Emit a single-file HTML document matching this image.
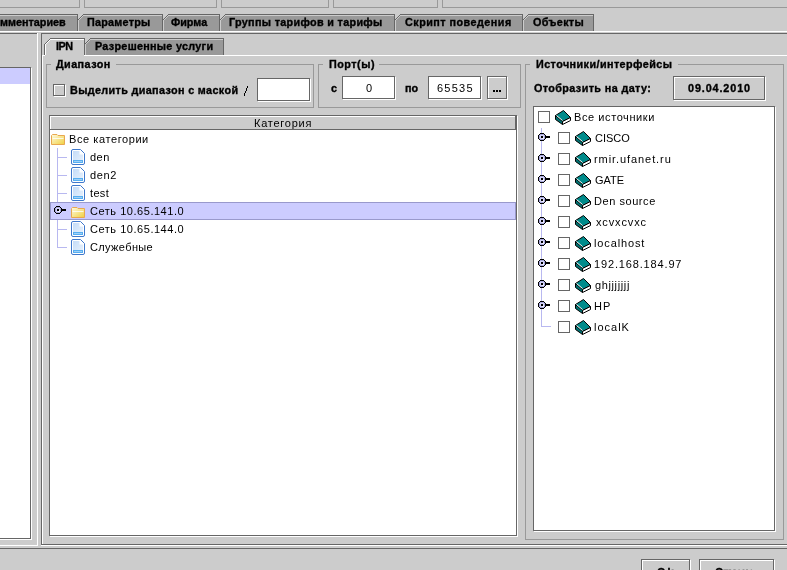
<!DOCTYPE html>
<html><head><meta charset="utf-8"><style>
html,body{margin:0;padding:0;}
body{width:787px;height:570px;overflow:hidden;background:#cccccc;position:relative;font-family:"Liberation Sans",sans-serif;}
div,span,svg{position:absolute;}
span{line-height:14px;white-space:pre;color:#000;will-change:transform;}
.b{-webkit-text-stroke:0.35px #000;}
.n{}
</style></head><body>
<div style="left:0px;top:7px;width:80px;height:1px;background:#999999;"></div>
<div style="left:79px;top:0px;width:1px;height:8px;background:#999999;"></div>
<div style="left:84px;top:7px;width:133px;height:1px;background:#999999;"></div>
<div style="left:84px;top:0px;width:1px;height:8px;background:#999999;"></div>
<div style="left:216px;top:0px;width:1px;height:8px;background:#999999;"></div>
<div style="left:221px;top:7px;width:108px;height:1px;background:#999999;"></div>
<div style="left:221px;top:0px;width:1px;height:8px;background:#999999;"></div>
<div style="left:328px;top:0px;width:1px;height:8px;background:#999999;"></div>
<div style="left:333px;top:7px;width:105px;height:1px;background:#999999;"></div>
<div style="left:333px;top:0px;width:1px;height:8px;background:#999999;"></div>
<div style="left:437px;top:0px;width:1px;height:8px;background:#999999;"></div>
<div style="left:442px;top:7px;width:345px;height:1px;background:#999999;"></div>
<div style="left:442px;top:0px;width:1px;height:8px;background:#999999;"></div>
<div style="left:0px;top:15px;width:77px;height:16px;background:#999999;"></div>
<div style="left:0px;top:14px;width:78px;height:1px;background:#666666;"></div>
<div style="left:0px;top:15px;width:77px;height:1px;background:#cccccc;"></div>
<div style="left:77px;top:15px;width:1px;height:16px;background:#666666;"></div>
<div style="left:78px;top:20px;width:84px;height:11px;background:#999999;"></div>
<div style="left:83px;top:15px;width:79px;height:1px;background:#999999;"></div>
<div style="left:82px;top:16px;width:80px;height:1px;background:#999999;"></div>
<div style="left:81px;top:17px;width:81px;height:1px;background:#999999;"></div>
<div style="left:80px;top:18px;width:82px;height:1px;background:#999999;"></div>
<div style="left:79px;top:19px;width:83px;height:1px;background:#999999;"></div>
<div style="left:78px;top:20px;width:1px;height:1px;background:#cccccc;"></div>
<div style="left:79px;top:19px;width:1px;height:1px;background:#cccccc;"></div>
<div style="left:80px;top:18px;width:1px;height:1px;background:#cccccc;"></div>
<div style="left:81px;top:17px;width:1px;height:1px;background:#cccccc;"></div>
<div style="left:82px;top:16px;width:1px;height:1px;background:#cccccc;"></div>
<div style="left:83px;top:15px;width:1px;height:1px;background:#cccccc;"></div>
<div style="left:83px;top:15px;width:79px;height:1px;background:#cccccc;"></div>
<div style="left:78px;top:20px;width:1px;height:11px;background:#cccccc;"></div>
<div style="left:78px;top:19px;width:1px;height:1px;background:#666666;"></div>
<div style="left:79px;top:18px;width:1px;height:1px;background:#666666;"></div>
<div style="left:80px;top:17px;width:1px;height:1px;background:#666666;"></div>
<div style="left:81px;top:16px;width:1px;height:1px;background:#666666;"></div>
<div style="left:82px;top:15px;width:1px;height:1px;background:#666666;"></div>
<div style="left:83px;top:14px;width:1px;height:1px;background:#666666;"></div>
<div style="left:83px;top:14px;width:80px;height:1px;background:#666666;"></div>
<div style="left:162px;top:15px;width:1px;height:16px;background:#666666;"></div>
<div style="left:163px;top:20px;width:56px;height:11px;background:#999999;"></div>
<div style="left:168px;top:15px;width:51px;height:1px;background:#999999;"></div>
<div style="left:167px;top:16px;width:52px;height:1px;background:#999999;"></div>
<div style="left:166px;top:17px;width:53px;height:1px;background:#999999;"></div>
<div style="left:165px;top:18px;width:54px;height:1px;background:#999999;"></div>
<div style="left:164px;top:19px;width:55px;height:1px;background:#999999;"></div>
<div style="left:163px;top:20px;width:1px;height:1px;background:#cccccc;"></div>
<div style="left:164px;top:19px;width:1px;height:1px;background:#cccccc;"></div>
<div style="left:165px;top:18px;width:1px;height:1px;background:#cccccc;"></div>
<div style="left:166px;top:17px;width:1px;height:1px;background:#cccccc;"></div>
<div style="left:167px;top:16px;width:1px;height:1px;background:#cccccc;"></div>
<div style="left:168px;top:15px;width:1px;height:1px;background:#cccccc;"></div>
<div style="left:168px;top:15px;width:51px;height:1px;background:#cccccc;"></div>
<div style="left:163px;top:20px;width:1px;height:11px;background:#cccccc;"></div>
<div style="left:163px;top:19px;width:1px;height:1px;background:#666666;"></div>
<div style="left:164px;top:18px;width:1px;height:1px;background:#666666;"></div>
<div style="left:165px;top:17px;width:1px;height:1px;background:#666666;"></div>
<div style="left:166px;top:16px;width:1px;height:1px;background:#666666;"></div>
<div style="left:167px;top:15px;width:1px;height:1px;background:#666666;"></div>
<div style="left:168px;top:14px;width:1px;height:1px;background:#666666;"></div>
<div style="left:168px;top:14px;width:52px;height:1px;background:#666666;"></div>
<div style="left:219px;top:15px;width:1px;height:16px;background:#666666;"></div>
<div style="left:220px;top:20px;width:174px;height:11px;background:#999999;"></div>
<div style="left:225px;top:15px;width:169px;height:1px;background:#999999;"></div>
<div style="left:224px;top:16px;width:170px;height:1px;background:#999999;"></div>
<div style="left:223px;top:17px;width:171px;height:1px;background:#999999;"></div>
<div style="left:222px;top:18px;width:172px;height:1px;background:#999999;"></div>
<div style="left:221px;top:19px;width:173px;height:1px;background:#999999;"></div>
<div style="left:220px;top:20px;width:1px;height:1px;background:#cccccc;"></div>
<div style="left:221px;top:19px;width:1px;height:1px;background:#cccccc;"></div>
<div style="left:222px;top:18px;width:1px;height:1px;background:#cccccc;"></div>
<div style="left:223px;top:17px;width:1px;height:1px;background:#cccccc;"></div>
<div style="left:224px;top:16px;width:1px;height:1px;background:#cccccc;"></div>
<div style="left:225px;top:15px;width:1px;height:1px;background:#cccccc;"></div>
<div style="left:225px;top:15px;width:169px;height:1px;background:#cccccc;"></div>
<div style="left:220px;top:20px;width:1px;height:11px;background:#cccccc;"></div>
<div style="left:220px;top:19px;width:1px;height:1px;background:#666666;"></div>
<div style="left:221px;top:18px;width:1px;height:1px;background:#666666;"></div>
<div style="left:222px;top:17px;width:1px;height:1px;background:#666666;"></div>
<div style="left:223px;top:16px;width:1px;height:1px;background:#666666;"></div>
<div style="left:224px;top:15px;width:1px;height:1px;background:#666666;"></div>
<div style="left:225px;top:14px;width:1px;height:1px;background:#666666;"></div>
<div style="left:225px;top:14px;width:170px;height:1px;background:#666666;"></div>
<div style="left:394px;top:15px;width:1px;height:16px;background:#666666;"></div>
<div style="left:395px;top:20px;width:127px;height:11px;background:#999999;"></div>
<div style="left:400px;top:15px;width:122px;height:1px;background:#999999;"></div>
<div style="left:399px;top:16px;width:123px;height:1px;background:#999999;"></div>
<div style="left:398px;top:17px;width:124px;height:1px;background:#999999;"></div>
<div style="left:397px;top:18px;width:125px;height:1px;background:#999999;"></div>
<div style="left:396px;top:19px;width:126px;height:1px;background:#999999;"></div>
<div style="left:395px;top:20px;width:1px;height:1px;background:#cccccc;"></div>
<div style="left:396px;top:19px;width:1px;height:1px;background:#cccccc;"></div>
<div style="left:397px;top:18px;width:1px;height:1px;background:#cccccc;"></div>
<div style="left:398px;top:17px;width:1px;height:1px;background:#cccccc;"></div>
<div style="left:399px;top:16px;width:1px;height:1px;background:#cccccc;"></div>
<div style="left:400px;top:15px;width:1px;height:1px;background:#cccccc;"></div>
<div style="left:400px;top:15px;width:122px;height:1px;background:#cccccc;"></div>
<div style="left:395px;top:20px;width:1px;height:11px;background:#cccccc;"></div>
<div style="left:395px;top:19px;width:1px;height:1px;background:#666666;"></div>
<div style="left:396px;top:18px;width:1px;height:1px;background:#666666;"></div>
<div style="left:397px;top:17px;width:1px;height:1px;background:#666666;"></div>
<div style="left:398px;top:16px;width:1px;height:1px;background:#666666;"></div>
<div style="left:399px;top:15px;width:1px;height:1px;background:#666666;"></div>
<div style="left:400px;top:14px;width:1px;height:1px;background:#666666;"></div>
<div style="left:400px;top:14px;width:123px;height:1px;background:#666666;"></div>
<div style="left:522px;top:15px;width:1px;height:16px;background:#666666;"></div>
<div style="left:523px;top:20px;width:70px;height:11px;background:#999999;"></div>
<div style="left:528px;top:15px;width:65px;height:1px;background:#999999;"></div>
<div style="left:527px;top:16px;width:66px;height:1px;background:#999999;"></div>
<div style="left:526px;top:17px;width:67px;height:1px;background:#999999;"></div>
<div style="left:525px;top:18px;width:68px;height:1px;background:#999999;"></div>
<div style="left:524px;top:19px;width:69px;height:1px;background:#999999;"></div>
<div style="left:523px;top:20px;width:1px;height:1px;background:#cccccc;"></div>
<div style="left:524px;top:19px;width:1px;height:1px;background:#cccccc;"></div>
<div style="left:525px;top:18px;width:1px;height:1px;background:#cccccc;"></div>
<div style="left:526px;top:17px;width:1px;height:1px;background:#cccccc;"></div>
<div style="left:527px;top:16px;width:1px;height:1px;background:#cccccc;"></div>
<div style="left:528px;top:15px;width:1px;height:1px;background:#cccccc;"></div>
<div style="left:528px;top:15px;width:65px;height:1px;background:#cccccc;"></div>
<div style="left:523px;top:20px;width:1px;height:11px;background:#cccccc;"></div>
<div style="left:523px;top:19px;width:1px;height:1px;background:#666666;"></div>
<div style="left:524px;top:18px;width:1px;height:1px;background:#666666;"></div>
<div style="left:525px;top:17px;width:1px;height:1px;background:#666666;"></div>
<div style="left:526px;top:16px;width:1px;height:1px;background:#666666;"></div>
<div style="left:527px;top:15px;width:1px;height:1px;background:#666666;"></div>
<div style="left:528px;top:14px;width:1px;height:1px;background:#666666;"></div>
<div style="left:528px;top:14px;width:66px;height:1px;background:#666666;"></div>
<div style="left:593px;top:15px;width:1px;height:16px;background:#666666;"></div>
<div style="left:0px;top:31px;width:787px;height:1px;background:#ffffff;"></div>
<div style="left:0px;top:33px;width:37px;height:1px;background:#666666;"></div>
<div style="left:37px;top:33px;width:1px;height:513px;background:#ffffff;"></div>
<div style="left:0px;top:545px;width:38px;height:1px;background:#ffffff;"></div>
<div style="left:41px;top:33px;width:746px;height:1px;background:#666666;"></div>
<div style="left:41px;top:33px;width:1px;height:512px;background:#666666;"></div>
<div style="left:41px;top:544px;width:746px;height:1px;background:#666666;"></div>
<div style="left:41px;top:545px;width:746px;height:1px;background:#ffffff;"></div>
<div style="left:0px;top:548px;width:787px;height:1px;background:#666666;"></div>
<div style="left:0px;top:68px;width:30px;height:470px;background:#ffffff;"></div>
<div style="left:0px;top:68px;width:30px;height:16px;background:#ccccff;"></div>
<div style="left:0px;top:67px;width:31px;height:1px;background:#666666;"></div>
<div style="left:30px;top:67px;width:1px;height:472px;background:#666666;"></div>
<div style="left:0px;top:538px;width:31px;height:1px;background:#666666;"></div>
<div style="left:31px;top:68px;width:1px;height:472px;background:#ffffff;"></div>
<div style="left:0px;top:539px;width:32px;height:1px;background:#ffffff;"></div>
<div style="left:42px;top:55px;width:3px;height:1px;background:#ffffff;"></div>
<div style="left:84px;top:55px;width:703px;height:1px;background:#ffffff;"></div>
<div style="left:42px;top:55px;width:1px;height:489px;background:#ffffff;"></div>
<div style="left:45px;top:44px;width:39px;height:11px;background:#cccccc;"></div>
<div style="left:50px;top:39px;width:34px;height:1px;background:#cccccc;"></div>
<div style="left:49px;top:40px;width:35px;height:1px;background:#cccccc;"></div>
<div style="left:48px;top:41px;width:36px;height:1px;background:#cccccc;"></div>
<div style="left:47px;top:42px;width:37px;height:1px;background:#cccccc;"></div>
<div style="left:46px;top:43px;width:38px;height:1px;background:#cccccc;"></div>
<div style="left:45px;top:44px;width:1px;height:1px;background:#ffffff;"></div>
<div style="left:46px;top:43px;width:1px;height:1px;background:#ffffff;"></div>
<div style="left:47px;top:42px;width:1px;height:1px;background:#ffffff;"></div>
<div style="left:48px;top:41px;width:1px;height:1px;background:#ffffff;"></div>
<div style="left:49px;top:40px;width:1px;height:1px;background:#ffffff;"></div>
<div style="left:50px;top:39px;width:1px;height:1px;background:#ffffff;"></div>
<div style="left:50px;top:39px;width:34px;height:1px;background:#ffffff;"></div>
<div style="left:45px;top:44px;width:1px;height:11px;background:#ffffff;"></div>
<div style="left:45px;top:43px;width:1px;height:1px;background:#666666;"></div>
<div style="left:46px;top:42px;width:1px;height:1px;background:#666666;"></div>
<div style="left:47px;top:41px;width:1px;height:1px;background:#666666;"></div>
<div style="left:48px;top:40px;width:1px;height:1px;background:#666666;"></div>
<div style="left:49px;top:39px;width:1px;height:1px;background:#666666;"></div>
<div style="left:50px;top:38px;width:1px;height:1px;background:#666666;"></div>
<div style="left:50px;top:38px;width:35px;height:1px;background:#666666;"></div>
<div style="left:84px;top:39px;width:1px;height:16px;background:#666666;"></div>
<div style="left:44px;top:44px;width:1px;height:11px;background:#666666;"></div>
<div style="left:85px;top:44px;width:138px;height:11px;background:#999999;"></div>
<div style="left:90px;top:39px;width:133px;height:1px;background:#999999;"></div>
<div style="left:89px;top:40px;width:134px;height:1px;background:#999999;"></div>
<div style="left:88px;top:41px;width:135px;height:1px;background:#999999;"></div>
<div style="left:87px;top:42px;width:136px;height:1px;background:#999999;"></div>
<div style="left:86px;top:43px;width:137px;height:1px;background:#999999;"></div>
<div style="left:85px;top:44px;width:1px;height:1px;background:#cccccc;"></div>
<div style="left:86px;top:43px;width:1px;height:1px;background:#cccccc;"></div>
<div style="left:87px;top:42px;width:1px;height:1px;background:#cccccc;"></div>
<div style="left:88px;top:41px;width:1px;height:1px;background:#cccccc;"></div>
<div style="left:89px;top:40px;width:1px;height:1px;background:#cccccc;"></div>
<div style="left:90px;top:39px;width:1px;height:1px;background:#cccccc;"></div>
<div style="left:90px;top:39px;width:133px;height:1px;background:#cccccc;"></div>
<div style="left:85px;top:44px;width:1px;height:11px;background:#cccccc;"></div>
<div style="left:85px;top:43px;width:1px;height:1px;background:#666666;"></div>
<div style="left:86px;top:42px;width:1px;height:1px;background:#666666;"></div>
<div style="left:87px;top:41px;width:1px;height:1px;background:#666666;"></div>
<div style="left:88px;top:40px;width:1px;height:1px;background:#666666;"></div>
<div style="left:89px;top:39px;width:1px;height:1px;background:#666666;"></div>
<div style="left:90px;top:38px;width:1px;height:1px;background:#666666;"></div>
<div style="left:90px;top:38px;width:134px;height:1px;background:#666666;"></div>
<div style="left:223px;top:39px;width:1px;height:16px;background:#666666;"></div>
<div style="left:84px;top:39px;width:1px;height:16px;background:#666666;"></div>
<div style="left:46px;top:64px;width:5px;height:1px;background:#999999;"></div>
<div style="left:116px;top:64px;width:198px;height:1px;background:#999999;"></div>
<div style="left:46px;top:64px;width:1px;height:44px;background:#999999;"></div>
<div style="left:313px;top:64px;width:1px;height:44px;background:#999999;"></div>
<div style="left:46px;top:107px;width:268px;height:1px;background:#999999;"></div>
<div style="left:54px;top:85px;width:12px;height:1px;background:#ffffff;"></div>
<div style="left:54px;top:96px;width:12px;height:1px;background:#ffffff;"></div>
<div style="left:54px;top:85px;width:1px;height:12px;background:#ffffff;"></div>
<div style="left:65px;top:85px;width:1px;height:12px;background:#ffffff;"></div>
<div style="left:53px;top:84px;width:12px;height:1px;background:#666666;"></div>
<div style="left:53px;top:95px;width:12px;height:1px;background:#666666;"></div>
<div style="left:53px;top:84px;width:1px;height:12px;background:#666666;"></div>
<div style="left:64px;top:84px;width:1px;height:12px;background:#666666;"></div>
<div style="left:258px;top:79px;width:52px;height:22px;background:#ffffff;"></div>
<div style="left:258px;top:79px;width:53px;height:1px;background:#ffffff;"></div>
<div style="left:258px;top:101px;width:53px;height:1px;background:#ffffff;"></div>
<div style="left:258px;top:79px;width:1px;height:23px;background:#ffffff;"></div>
<div style="left:310px;top:79px;width:1px;height:23px;background:#ffffff;"></div>
<div style="left:257px;top:78px;width:53px;height:1px;background:#666666;"></div>
<div style="left:257px;top:100px;width:53px;height:1px;background:#666666;"></div>
<div style="left:257px;top:78px;width:1px;height:23px;background:#666666;"></div>
<div style="left:309px;top:78px;width:1px;height:23px;background:#666666;"></div>
<div style="left:318px;top:64px;width:5px;height:1px;background:#999999;"></div>
<div style="left:379px;top:64px;width:142px;height:1px;background:#999999;"></div>
<div style="left:318px;top:64px;width:1px;height:44px;background:#999999;"></div>
<div style="left:520px;top:64px;width:1px;height:44px;background:#999999;"></div>
<div style="left:318px;top:107px;width:203px;height:1px;background:#999999;"></div>
<div style="left:343px;top:77px;width:52px;height:22px;background:#ffffff;"></div>
<div style="left:343px;top:77px;width:53px;height:1px;background:#ffffff;"></div>
<div style="left:343px;top:99px;width:53px;height:1px;background:#ffffff;"></div>
<div style="left:343px;top:77px;width:1px;height:23px;background:#ffffff;"></div>
<div style="left:395px;top:77px;width:1px;height:23px;background:#ffffff;"></div>
<div style="left:342px;top:76px;width:53px;height:1px;background:#666666;"></div>
<div style="left:342px;top:98px;width:53px;height:1px;background:#666666;"></div>
<div style="left:342px;top:76px;width:1px;height:23px;background:#666666;"></div>
<div style="left:394px;top:76px;width:1px;height:23px;background:#666666;"></div>
<div style="left:429px;top:77px;width:52px;height:22px;background:#ffffff;"></div>
<div style="left:429px;top:77px;width:53px;height:1px;background:#ffffff;"></div>
<div style="left:429px;top:99px;width:53px;height:1px;background:#ffffff;"></div>
<div style="left:429px;top:77px;width:1px;height:23px;background:#ffffff;"></div>
<div style="left:481px;top:77px;width:1px;height:23px;background:#ffffff;"></div>
<div style="left:428px;top:76px;width:53px;height:1px;background:#666666;"></div>
<div style="left:428px;top:98px;width:53px;height:1px;background:#666666;"></div>
<div style="left:428px;top:76px;width:1px;height:23px;background:#666666;"></div>
<div style="left:480px;top:76px;width:1px;height:23px;background:#666666;"></div>
<div style="left:488px;top:77px;width:20px;height:1px;background:#ffffff;"></div>
<div style="left:488px;top:99px;width:20px;height:1px;background:#ffffff;"></div>
<div style="left:488px;top:77px;width:1px;height:23px;background:#ffffff;"></div>
<div style="left:507px;top:77px;width:1px;height:23px;background:#ffffff;"></div>
<div style="left:487px;top:76px;width:20px;height:1px;background:#666666;"></div>
<div style="left:487px;top:98px;width:20px;height:1px;background:#666666;"></div>
<div style="left:487px;top:76px;width:1px;height:23px;background:#666666;"></div>
<div style="left:506px;top:76px;width:1px;height:23px;background:#666666;"></div>
<div style="left:50px;top:116px;width:466px;height:420px;background:#ffffff;"></div>
<div style="left:49px;top:115px;width:468px;height:1px;background:#666666;"></div>
<div style="left:49px;top:535px;width:468px;height:1px;background:#666666;"></div>
<div style="left:49px;top:115px;width:1px;height:421px;background:#666666;"></div>
<div style="left:516px;top:115px;width:1px;height:421px;background:#666666;"></div>
<div style="left:517px;top:116px;width:1px;height:421px;background:#ffffff;"></div>
<div style="left:50px;top:536px;width:468px;height:1px;background:#ffffff;"></div>
<div style="left:50px;top:116px;width:466px;height:14px;background:#cccccc;"></div>
<div style="left:50px;top:116px;width:465px;height:1px;background:#ffffff;"></div>
<div style="left:50px;top:116px;width:1px;height:13px;background:#ffffff;"></div>
<div style="left:515px;top:116px;width:1px;height:14px;background:#666666;"></div>
<div style="left:50px;top:129px;width:466px;height:1px;background:#666666;"></div>
<div style="left:50px;top:202px;width:466px;height:18px;background:#ccccff;"></div>
<div style="left:50px;top:202px;width:466px;height:1px;background:#9999cc;"></div>
<div style="left:50px;top:219px;width:466px;height:1px;background:#9999cc;"></div>
<div style="left:515px;top:202px;width:1px;height:18px;background:#9999cc;"></div>
<div style="left:50px;top:202px;width:1px;height:18px;background:#9999cc;"></div>
<div style="left:57px;top:148px;width:1px;height:54px;background:#b8b8f0;"></div>
<div style="left:57px;top:220px;width:1px;height:28px;background:#b8b8f0;"></div>
<div style="left:58px;top:157px;width:9px;height:1px;background:#b8b8f0;"></div>
<div style="left:58px;top:175px;width:9px;height:1px;background:#b8b8f0;"></div>
<div style="left:58px;top:193px;width:9px;height:1px;background:#b8b8f0;"></div>
<div style="left:58px;top:229px;width:9px;height:1px;background:#b8b8f0;"></div>
<div style="left:58px;top:247px;width:9px;height:1px;background:#b8b8f0;"></div>
<div style="left:525px;top:64px;width:5px;height:1px;background:#999999;"></div>
<div style="left:678px;top:64px;width:106px;height:1px;background:#999999;"></div>
<div style="left:525px;top:64px;width:1px;height:476px;background:#999999;"></div>
<div style="left:783px;top:64px;width:1px;height:476px;background:#999999;"></div>
<div style="left:525px;top:539px;width:259px;height:1px;background:#999999;"></div>
<div style="left:674px;top:77px;width:92px;height:1px;background:#ffffff;"></div>
<div style="left:674px;top:100px;width:92px;height:1px;background:#ffffff;"></div>
<div style="left:674px;top:77px;width:1px;height:24px;background:#ffffff;"></div>
<div style="left:765px;top:77px;width:1px;height:24px;background:#ffffff;"></div>
<div style="left:673px;top:76px;width:92px;height:1px;background:#666666;"></div>
<div style="left:673px;top:99px;width:92px;height:1px;background:#666666;"></div>
<div style="left:673px;top:76px;width:1px;height:24px;background:#666666;"></div>
<div style="left:764px;top:76px;width:1px;height:24px;background:#666666;"></div>
<div style="left:534px;top:107px;width:240px;height:423px;background:#ffffff;"></div>
<div style="left:533px;top:106px;width:242px;height:1px;background:#666666;"></div>
<div style="left:533px;top:530px;width:242px;height:1px;background:#666666;"></div>
<div style="left:533px;top:106px;width:1px;height:425px;background:#666666;"></div>
<div style="left:774px;top:106px;width:1px;height:425px;background:#666666;"></div>
<div style="left:775px;top:107px;width:1px;height:425px;background:#ffffff;"></div>
<div style="left:534px;top:531px;width:242px;height:1px;background:#ffffff;"></div>
<div style="left:541px;top:128px;width:1px;height:199px;background:#b8b8f0;"></div>
<div style="left:542px;top:326px;width:9px;height:1px;background:#b8b8f0;"></div>
<div style="left:642px;top:560px;width:49px;height:1px;background:#ffffff;"></div>
<div style="left:642px;top:581px;width:49px;height:1px;background:#ffffff;"></div>
<div style="left:642px;top:560px;width:1px;height:22px;background:#ffffff;"></div>
<div style="left:690px;top:560px;width:1px;height:22px;background:#ffffff;"></div>
<div style="left:641px;top:559px;width:49px;height:1px;background:#666666;"></div>
<div style="left:641px;top:580px;width:49px;height:1px;background:#666666;"></div>
<div style="left:641px;top:559px;width:1px;height:22px;background:#666666;"></div>
<div style="left:689px;top:559px;width:1px;height:22px;background:#666666;"></div>
<div style="left:700px;top:560px;width:75px;height:1px;background:#ffffff;"></div>
<div style="left:700px;top:581px;width:75px;height:1px;background:#ffffff;"></div>
<div style="left:700px;top:560px;width:1px;height:22px;background:#ffffff;"></div>
<div style="left:774px;top:560px;width:1px;height:22px;background:#ffffff;"></div>
<div style="left:699px;top:559px;width:75px;height:1px;background:#666666;"></div>
<div style="left:699px;top:580px;width:75px;height:1px;background:#666666;"></div>
<div style="left:699px;top:559px;width:1px;height:22px;background:#666666;"></div>
<div style="left:773px;top:559px;width:1px;height:22px;background:#666666;"></div>
<svg style="position:absolute;left:51px;top:134px" width="14" height="11" viewBox="0 0 14 11"><defs><linearGradient id="fg" x1="0" y1="0" x2="1" y2="1"><stop offset="0" stop-color="#fffbe0"/><stop offset="1" stop-color="#f0d040"/></linearGradient></defs><path d="M0.5,1.5 V10.5 H13.5 V1.5 H7 L6,0.5 H1.5 Z" fill="url(#fg)" stroke="#e8a850" stroke-width="1"/><path d="M1.5,4.5 H12.5" stroke="#fff" stroke-width="1" opacity="0.8"/></svg>
<svg style="position:absolute;left:71px;top:149px" width="14" height="16" viewBox="0 0 14 16"><defs><linearGradient id="dg" x1="0" y1="0" x2="1" y2="1"><stop offset="0" stop-color="#c4dcf8"/><stop offset="1" stop-color="#eaf3fd"/></linearGradient></defs><path d="M2,0.5 H9.5 L13.5,4.5 V14 Q13.5,15.5 12,15.5 H2 Q0.5,15.5 0.5,14 V2 Q0.5,0.5 2,0.5 Z" fill="#fff" stroke="#3f78cc" stroke-width="1"/><path d="M2,2 H8.5 L12,5.5 V14 H2 Z" fill="url(#dg)"/><path d="M8.5,1.5 L12.5,5.5 H8.5 Z" fill="#fff"/><rect x="2" y="11" width="10" height="3" fill="#56aef0"/><rect x="3" y="12" width="8" height="1" fill="#9fd0f8"/></svg>
<svg style="position:absolute;left:71px;top:167px" width="14" height="16" viewBox="0 0 14 16"><defs><linearGradient id="dg" x1="0" y1="0" x2="1" y2="1"><stop offset="0" stop-color="#c4dcf8"/><stop offset="1" stop-color="#eaf3fd"/></linearGradient></defs><path d="M2,0.5 H9.5 L13.5,4.5 V14 Q13.5,15.5 12,15.5 H2 Q0.5,15.5 0.5,14 V2 Q0.5,0.5 2,0.5 Z" fill="#fff" stroke="#3f78cc" stroke-width="1"/><path d="M2,2 H8.5 L12,5.5 V14 H2 Z" fill="url(#dg)"/><path d="M8.5,1.5 L12.5,5.5 H8.5 Z" fill="#fff"/><rect x="2" y="11" width="10" height="3" fill="#56aef0"/><rect x="3" y="12" width="8" height="1" fill="#9fd0f8"/></svg>
<svg style="position:absolute;left:71px;top:185px" width="14" height="16" viewBox="0 0 14 16"><defs><linearGradient id="dg" x1="0" y1="0" x2="1" y2="1"><stop offset="0" stop-color="#c4dcf8"/><stop offset="1" stop-color="#eaf3fd"/></linearGradient></defs><path d="M2,0.5 H9.5 L13.5,4.5 V14 Q13.5,15.5 12,15.5 H2 Q0.5,15.5 0.5,14 V2 Q0.5,0.5 2,0.5 Z" fill="#fff" stroke="#3f78cc" stroke-width="1"/><path d="M2,2 H8.5 L12,5.5 V14 H2 Z" fill="url(#dg)"/><path d="M8.5,1.5 L12.5,5.5 H8.5 Z" fill="#fff"/><rect x="2" y="11" width="10" height="3" fill="#56aef0"/><rect x="3" y="12" width="8" height="1" fill="#9fd0f8"/></svg>
<svg style="position:absolute;left:71px;top:221px" width="14" height="16" viewBox="0 0 14 16"><defs><linearGradient id="dg" x1="0" y1="0" x2="1" y2="1"><stop offset="0" stop-color="#c4dcf8"/><stop offset="1" stop-color="#eaf3fd"/></linearGradient></defs><path d="M2,0.5 H9.5 L13.5,4.5 V14 Q13.5,15.5 12,15.5 H2 Q0.5,15.5 0.5,14 V2 Q0.5,0.5 2,0.5 Z" fill="#fff" stroke="#3f78cc" stroke-width="1"/><path d="M2,2 H8.5 L12,5.5 V14 H2 Z" fill="url(#dg)"/><path d="M8.5,1.5 L12.5,5.5 H8.5 Z" fill="#fff"/><rect x="2" y="11" width="10" height="3" fill="#56aef0"/><rect x="3" y="12" width="8" height="1" fill="#9fd0f8"/></svg>
<svg style="position:absolute;left:71px;top:239px" width="14" height="16" viewBox="0 0 14 16"><defs><linearGradient id="dg" x1="0" y1="0" x2="1" y2="1"><stop offset="0" stop-color="#c4dcf8"/><stop offset="1" stop-color="#eaf3fd"/></linearGradient></defs><path d="M2,0.5 H9.5 L13.5,4.5 V14 Q13.5,15.5 12,15.5 H2 Q0.5,15.5 0.5,14 V2 Q0.5,0.5 2,0.5 Z" fill="#fff" stroke="#3f78cc" stroke-width="1"/><path d="M2,2 H8.5 L12,5.5 V14 H2 Z" fill="url(#dg)"/><path d="M8.5,1.5 L12.5,5.5 H8.5 Z" fill="#fff"/><rect x="2" y="11" width="10" height="3" fill="#56aef0"/><rect x="3" y="12" width="8" height="1" fill="#9fd0f8"/></svg>
<svg style="position:absolute;left:71px;top:207px" width="14" height="11" viewBox="0 0 14 11"><defs><linearGradient id="fg" x1="0" y1="0" x2="1" y2="1"><stop offset="0" stop-color="#fffbe0"/><stop offset="1" stop-color="#f0d040"/></linearGradient></defs><path d="M0.5,1.5 V10.5 H13.5 V1.5 H7 L6,0.5 H1.5 Z" fill="url(#fg)" stroke="#e8a850" stroke-width="1"/><path d="M1.5,4.5 H12.5" stroke="#fff" stroke-width="1" opacity="0.8"/></svg>
<svg style="position:absolute;left:54px;top:206px" width="12" height="8" viewBox="0 0 12 8" shape-rendering="crispEdges"><rect x="1" y="1" width="1" height="1" fill="#a8a8dc"/><rect x="2" y="1" width="1" height="1" fill="#a8a8dc"/><rect x="3" y="1" width="1" height="1" fill="#a8a8dc"/><rect x="4" y="1" width="1" height="1" fill="#a8a8dc"/><rect x="5" y="1" width="1" height="1" fill="#a8a8dc"/><rect x="6" y="1" width="1" height="1" fill="#a8a8dc"/><rect x="1" y="2" width="1" height="1" fill="#a8a8dc"/><rect x="2" y="2" width="1" height="1" fill="#a8a8dc"/><rect x="3" y="2" width="1" height="1" fill="#a8a8dc"/><rect x="4" y="2" width="1" height="1" fill="#a8a8dc"/><rect x="5" y="2" width="1" height="1" fill="#a8a8dc"/><rect x="6" y="2" width="1" height="1" fill="#a8a8dc"/><rect x="1" y="3" width="1" height="1" fill="#a8a8dc"/><rect x="2" y="3" width="1" height="1" fill="#a8a8dc"/><rect x="3" y="3" width="1" height="1" fill="#a8a8dc"/><rect x="4" y="3" width="1" height="1" fill="#a8a8dc"/><rect x="5" y="3" width="1" height="1" fill="#a8a8dc"/><rect x="6" y="3" width="1" height="1" fill="#a8a8dc"/><rect x="1" y="4" width="1" height="1" fill="#a8a8dc"/><rect x="2" y="4" width="1" height="1" fill="#a8a8dc"/><rect x="3" y="4" width="1" height="1" fill="#a8a8dc"/><rect x="4" y="4" width="1" height="1" fill="#a8a8dc"/><rect x="5" y="4" width="1" height="1" fill="#a8a8dc"/><rect x="6" y="4" width="1" height="1" fill="#a8a8dc"/><rect x="1" y="5" width="1" height="1" fill="#a8a8dc"/><rect x="2" y="5" width="1" height="1" fill="#a8a8dc"/><rect x="3" y="5" width="1" height="1" fill="#a8a8dc"/><rect x="4" y="5" width="1" height="1" fill="#a8a8dc"/><rect x="5" y="5" width="1" height="1" fill="#a8a8dc"/><rect x="6" y="5" width="1" height="1" fill="#a8a8dc"/><rect x="1" y="6" width="1" height="1" fill="#a8a8dc"/><rect x="2" y="6" width="1" height="1" fill="#a8a8dc"/><rect x="3" y="6" width="1" height="1" fill="#a8a8dc"/><rect x="4" y="6" width="1" height="1" fill="#a8a8dc"/><rect x="5" y="6" width="1" height="1" fill="#a8a8dc"/><rect x="6" y="6" width="1" height="1" fill="#a8a8dc"/><rect x="2" y="2" width="1" height="1" fill="#d4d4f8"/><rect x="3" y="2" width="1" height="1" fill="#d4d4f8"/><rect x="4" y="2" width="1" height="1" fill="#d4d4f8"/><rect x="5" y="2" width="1" height="1" fill="#d4d4f8"/><rect x="2" y="3" width="1" height="1" fill="#d4d4f8"/><rect x="2" y="4" width="1" height="1" fill="#d4d4f8"/><rect x="2" y="5" width="1" height="1" fill="#d4d4f8"/><rect x="5" y="3" width="1" height="1" fill="#d4d4f8"/><rect x="5" y="4" width="1" height="1" fill="#d4d4f8"/><rect x="5" y="5" width="1" height="1" fill="#d4d4f8"/><rect x="3" y="5" width="1" height="1" fill="#d4d4f8"/><rect x="4" y="5" width="1" height="1" fill="#d4d4f8"/><rect x="4" y="5" width="1" height="1" fill="#f0f0ff"/><rect x="5" y="4" width="1" height="1" fill="#f0f0ff"/><rect x="5" y="5" width="1" height="1" fill="#f0f0ff"/><rect x="3" y="3" width="1" height="1" fill="#000"/><rect x="4" y="3" width="1" height="1" fill="#000"/><rect x="3" y="4" width="1" height="1" fill="#000"/><rect x="4" y="4" width="1" height="1" fill="#000"/><rect x="2" y="0" width="1" height="1" fill="#000"/><rect x="3" y="0" width="1" height="1" fill="#000"/><rect x="4" y="0" width="1" height="1" fill="#000"/><rect x="5" y="0" width="1" height="1" fill="#000"/><rect x="1" y="1" width="1" height="1" fill="#000"/><rect x="6" y="1" width="1" height="1" fill="#000"/><rect x="0" y="2" width="1" height="1" fill="#000"/><rect x="7" y="2" width="1" height="1" fill="#000"/><rect x="0" y="3" width="1" height="1" fill="#000"/><rect x="7" y="3" width="1" height="1" fill="#000"/><rect x="0" y="4" width="1" height="1" fill="#000"/><rect x="7" y="4" width="1" height="1" fill="#000"/><rect x="0" y="5" width="1" height="1" fill="#000"/><rect x="7" y="5" width="1" height="1" fill="#000"/><rect x="1" y="6" width="1" height="1" fill="#000"/><rect x="6" y="6" width="1" height="1" fill="#000"/><rect x="2" y="7" width="1" height="1" fill="#000"/><rect x="3" y="7" width="1" height="1" fill="#000"/><rect x="4" y="7" width="1" height="1" fill="#000"/><rect x="5" y="7" width="1" height="1" fill="#000"/><rect x="8" y="3" width="1" height="1" fill="#000"/><rect x="8" y="4" width="1" height="1" fill="#000"/><rect x="9" y="3" width="1" height="1" fill="#000"/><rect x="9" y="4" width="1" height="1" fill="#000"/><rect x="10" y="3" width="1" height="1" fill="#000"/><rect x="10" y="4" width="1" height="1" fill="#000"/><rect x="11" y="3" width="1" height="1" fill="#000"/><rect x="11" y="4" width="1" height="1" fill="#000"/></svg>
<div style="left:538px;top:111px;width:12px;height:1px;background:#666666;"></div>
<div style="left:538px;top:122px;width:12px;height:1px;background:#666666;"></div>
<div style="left:538px;top:111px;width:1px;height:12px;background:#666666;"></div>
<div style="left:549px;top:111px;width:1px;height:12px;background:#666666;"></div>
<svg style="position:absolute;left:555px;top:110px" width="17" height="16" viewBox="0 0 17 16"><polygon points="0.5,5.5 8.5,0.5 15.5,7.5 7.5,11.5" fill="#008b8b" stroke="#000" stroke-width="1"/><polygon points="0.5,5.5 7.5,11.5 7.5,14.5 0.5,9.5" fill="#007070" stroke="#000" stroke-width="1"/><polygon points="7.5,11.5 15.5,7.5 15.5,10.5 7.5,14.5" fill="#fff" stroke="#000" stroke-width="1"/><line x1="1.5" y1="5.5" x2="7.5" y2="10.5" stroke="#fff" stroke-width="1"/></svg>
<svg style="position:absolute;left:538px;top:133px" width="12" height="8" viewBox="0 0 12 8" shape-rendering="crispEdges"><rect x="1" y="1" width="1" height="1" fill="#a8a8dc"/><rect x="2" y="1" width="1" height="1" fill="#a8a8dc"/><rect x="3" y="1" width="1" height="1" fill="#a8a8dc"/><rect x="4" y="1" width="1" height="1" fill="#a8a8dc"/><rect x="5" y="1" width="1" height="1" fill="#a8a8dc"/><rect x="6" y="1" width="1" height="1" fill="#a8a8dc"/><rect x="1" y="2" width="1" height="1" fill="#a8a8dc"/><rect x="2" y="2" width="1" height="1" fill="#a8a8dc"/><rect x="3" y="2" width="1" height="1" fill="#a8a8dc"/><rect x="4" y="2" width="1" height="1" fill="#a8a8dc"/><rect x="5" y="2" width="1" height="1" fill="#a8a8dc"/><rect x="6" y="2" width="1" height="1" fill="#a8a8dc"/><rect x="1" y="3" width="1" height="1" fill="#a8a8dc"/><rect x="2" y="3" width="1" height="1" fill="#a8a8dc"/><rect x="3" y="3" width="1" height="1" fill="#a8a8dc"/><rect x="4" y="3" width="1" height="1" fill="#a8a8dc"/><rect x="5" y="3" width="1" height="1" fill="#a8a8dc"/><rect x="6" y="3" width="1" height="1" fill="#a8a8dc"/><rect x="1" y="4" width="1" height="1" fill="#a8a8dc"/><rect x="2" y="4" width="1" height="1" fill="#a8a8dc"/><rect x="3" y="4" width="1" height="1" fill="#a8a8dc"/><rect x="4" y="4" width="1" height="1" fill="#a8a8dc"/><rect x="5" y="4" width="1" height="1" fill="#a8a8dc"/><rect x="6" y="4" width="1" height="1" fill="#a8a8dc"/><rect x="1" y="5" width="1" height="1" fill="#a8a8dc"/><rect x="2" y="5" width="1" height="1" fill="#a8a8dc"/><rect x="3" y="5" width="1" height="1" fill="#a8a8dc"/><rect x="4" y="5" width="1" height="1" fill="#a8a8dc"/><rect x="5" y="5" width="1" height="1" fill="#a8a8dc"/><rect x="6" y="5" width="1" height="1" fill="#a8a8dc"/><rect x="1" y="6" width="1" height="1" fill="#a8a8dc"/><rect x="2" y="6" width="1" height="1" fill="#a8a8dc"/><rect x="3" y="6" width="1" height="1" fill="#a8a8dc"/><rect x="4" y="6" width="1" height="1" fill="#a8a8dc"/><rect x="5" y="6" width="1" height="1" fill="#a8a8dc"/><rect x="6" y="6" width="1" height="1" fill="#a8a8dc"/><rect x="2" y="2" width="1" height="1" fill="#d4d4f8"/><rect x="3" y="2" width="1" height="1" fill="#d4d4f8"/><rect x="4" y="2" width="1" height="1" fill="#d4d4f8"/><rect x="5" y="2" width="1" height="1" fill="#d4d4f8"/><rect x="2" y="3" width="1" height="1" fill="#d4d4f8"/><rect x="2" y="4" width="1" height="1" fill="#d4d4f8"/><rect x="2" y="5" width="1" height="1" fill="#d4d4f8"/><rect x="5" y="3" width="1" height="1" fill="#d4d4f8"/><rect x="5" y="4" width="1" height="1" fill="#d4d4f8"/><rect x="5" y="5" width="1" height="1" fill="#d4d4f8"/><rect x="3" y="5" width="1" height="1" fill="#d4d4f8"/><rect x="4" y="5" width="1" height="1" fill="#d4d4f8"/><rect x="4" y="5" width="1" height="1" fill="#f0f0ff"/><rect x="5" y="4" width="1" height="1" fill="#f0f0ff"/><rect x="5" y="5" width="1" height="1" fill="#f0f0ff"/><rect x="3" y="3" width="1" height="1" fill="#000"/><rect x="4" y="3" width="1" height="1" fill="#000"/><rect x="3" y="4" width="1" height="1" fill="#000"/><rect x="4" y="4" width="1" height="1" fill="#000"/><rect x="2" y="0" width="1" height="1" fill="#000"/><rect x="3" y="0" width="1" height="1" fill="#000"/><rect x="4" y="0" width="1" height="1" fill="#000"/><rect x="5" y="0" width="1" height="1" fill="#000"/><rect x="1" y="1" width="1" height="1" fill="#000"/><rect x="6" y="1" width="1" height="1" fill="#000"/><rect x="0" y="2" width="1" height="1" fill="#000"/><rect x="7" y="2" width="1" height="1" fill="#000"/><rect x="0" y="3" width="1" height="1" fill="#000"/><rect x="7" y="3" width="1" height="1" fill="#000"/><rect x="0" y="4" width="1" height="1" fill="#000"/><rect x="7" y="4" width="1" height="1" fill="#000"/><rect x="0" y="5" width="1" height="1" fill="#000"/><rect x="7" y="5" width="1" height="1" fill="#000"/><rect x="1" y="6" width="1" height="1" fill="#000"/><rect x="6" y="6" width="1" height="1" fill="#000"/><rect x="2" y="7" width="1" height="1" fill="#000"/><rect x="3" y="7" width="1" height="1" fill="#000"/><rect x="4" y="7" width="1" height="1" fill="#000"/><rect x="5" y="7" width="1" height="1" fill="#000"/><rect x="8" y="3" width="1" height="1" fill="#000"/><rect x="8" y="4" width="1" height="1" fill="#000"/><rect x="9" y="3" width="1" height="1" fill="#000"/><rect x="9" y="4" width="1" height="1" fill="#000"/><rect x="10" y="3" width="1" height="1" fill="#000"/><rect x="10" y="4" width="1" height="1" fill="#000"/><rect x="11" y="3" width="1" height="1" fill="#000"/><rect x="11" y="4" width="1" height="1" fill="#000"/></svg>
<div style="left:558px;top:132px;width:12px;height:1px;background:#666666;"></div>
<div style="left:558px;top:143px;width:12px;height:1px;background:#666666;"></div>
<div style="left:558px;top:132px;width:1px;height:12px;background:#666666;"></div>
<div style="left:569px;top:132px;width:1px;height:12px;background:#666666;"></div>
<svg style="position:absolute;left:575px;top:131px" width="17" height="16" viewBox="0 0 17 16"><polygon points="0.5,5.5 8.5,0.5 15.5,7.5 7.5,11.5" fill="#008b8b" stroke="#000" stroke-width="1"/><polygon points="0.5,5.5 7.5,11.5 7.5,14.5 0.5,9.5" fill="#007070" stroke="#000" stroke-width="1"/><polygon points="7.5,11.5 15.5,7.5 15.5,10.5 7.5,14.5" fill="#fff" stroke="#000" stroke-width="1"/><line x1="1.5" y1="5.5" x2="7.5" y2="10.5" stroke="#fff" stroke-width="1"/></svg>
<svg style="position:absolute;left:538px;top:154px" width="12" height="8" viewBox="0 0 12 8" shape-rendering="crispEdges"><rect x="1" y="1" width="1" height="1" fill="#a8a8dc"/><rect x="2" y="1" width="1" height="1" fill="#a8a8dc"/><rect x="3" y="1" width="1" height="1" fill="#a8a8dc"/><rect x="4" y="1" width="1" height="1" fill="#a8a8dc"/><rect x="5" y="1" width="1" height="1" fill="#a8a8dc"/><rect x="6" y="1" width="1" height="1" fill="#a8a8dc"/><rect x="1" y="2" width="1" height="1" fill="#a8a8dc"/><rect x="2" y="2" width="1" height="1" fill="#a8a8dc"/><rect x="3" y="2" width="1" height="1" fill="#a8a8dc"/><rect x="4" y="2" width="1" height="1" fill="#a8a8dc"/><rect x="5" y="2" width="1" height="1" fill="#a8a8dc"/><rect x="6" y="2" width="1" height="1" fill="#a8a8dc"/><rect x="1" y="3" width="1" height="1" fill="#a8a8dc"/><rect x="2" y="3" width="1" height="1" fill="#a8a8dc"/><rect x="3" y="3" width="1" height="1" fill="#a8a8dc"/><rect x="4" y="3" width="1" height="1" fill="#a8a8dc"/><rect x="5" y="3" width="1" height="1" fill="#a8a8dc"/><rect x="6" y="3" width="1" height="1" fill="#a8a8dc"/><rect x="1" y="4" width="1" height="1" fill="#a8a8dc"/><rect x="2" y="4" width="1" height="1" fill="#a8a8dc"/><rect x="3" y="4" width="1" height="1" fill="#a8a8dc"/><rect x="4" y="4" width="1" height="1" fill="#a8a8dc"/><rect x="5" y="4" width="1" height="1" fill="#a8a8dc"/><rect x="6" y="4" width="1" height="1" fill="#a8a8dc"/><rect x="1" y="5" width="1" height="1" fill="#a8a8dc"/><rect x="2" y="5" width="1" height="1" fill="#a8a8dc"/><rect x="3" y="5" width="1" height="1" fill="#a8a8dc"/><rect x="4" y="5" width="1" height="1" fill="#a8a8dc"/><rect x="5" y="5" width="1" height="1" fill="#a8a8dc"/><rect x="6" y="5" width="1" height="1" fill="#a8a8dc"/><rect x="1" y="6" width="1" height="1" fill="#a8a8dc"/><rect x="2" y="6" width="1" height="1" fill="#a8a8dc"/><rect x="3" y="6" width="1" height="1" fill="#a8a8dc"/><rect x="4" y="6" width="1" height="1" fill="#a8a8dc"/><rect x="5" y="6" width="1" height="1" fill="#a8a8dc"/><rect x="6" y="6" width="1" height="1" fill="#a8a8dc"/><rect x="2" y="2" width="1" height="1" fill="#d4d4f8"/><rect x="3" y="2" width="1" height="1" fill="#d4d4f8"/><rect x="4" y="2" width="1" height="1" fill="#d4d4f8"/><rect x="5" y="2" width="1" height="1" fill="#d4d4f8"/><rect x="2" y="3" width="1" height="1" fill="#d4d4f8"/><rect x="2" y="4" width="1" height="1" fill="#d4d4f8"/><rect x="2" y="5" width="1" height="1" fill="#d4d4f8"/><rect x="5" y="3" width="1" height="1" fill="#d4d4f8"/><rect x="5" y="4" width="1" height="1" fill="#d4d4f8"/><rect x="5" y="5" width="1" height="1" fill="#d4d4f8"/><rect x="3" y="5" width="1" height="1" fill="#d4d4f8"/><rect x="4" y="5" width="1" height="1" fill="#d4d4f8"/><rect x="4" y="5" width="1" height="1" fill="#f0f0ff"/><rect x="5" y="4" width="1" height="1" fill="#f0f0ff"/><rect x="5" y="5" width="1" height="1" fill="#f0f0ff"/><rect x="3" y="3" width="1" height="1" fill="#000"/><rect x="4" y="3" width="1" height="1" fill="#000"/><rect x="3" y="4" width="1" height="1" fill="#000"/><rect x="4" y="4" width="1" height="1" fill="#000"/><rect x="2" y="0" width="1" height="1" fill="#000"/><rect x="3" y="0" width="1" height="1" fill="#000"/><rect x="4" y="0" width="1" height="1" fill="#000"/><rect x="5" y="0" width="1" height="1" fill="#000"/><rect x="1" y="1" width="1" height="1" fill="#000"/><rect x="6" y="1" width="1" height="1" fill="#000"/><rect x="0" y="2" width="1" height="1" fill="#000"/><rect x="7" y="2" width="1" height="1" fill="#000"/><rect x="0" y="3" width="1" height="1" fill="#000"/><rect x="7" y="3" width="1" height="1" fill="#000"/><rect x="0" y="4" width="1" height="1" fill="#000"/><rect x="7" y="4" width="1" height="1" fill="#000"/><rect x="0" y="5" width="1" height="1" fill="#000"/><rect x="7" y="5" width="1" height="1" fill="#000"/><rect x="1" y="6" width="1" height="1" fill="#000"/><rect x="6" y="6" width="1" height="1" fill="#000"/><rect x="2" y="7" width="1" height="1" fill="#000"/><rect x="3" y="7" width="1" height="1" fill="#000"/><rect x="4" y="7" width="1" height="1" fill="#000"/><rect x="5" y="7" width="1" height="1" fill="#000"/><rect x="8" y="3" width="1" height="1" fill="#000"/><rect x="8" y="4" width="1" height="1" fill="#000"/><rect x="9" y="3" width="1" height="1" fill="#000"/><rect x="9" y="4" width="1" height="1" fill="#000"/><rect x="10" y="3" width="1" height="1" fill="#000"/><rect x="10" y="4" width="1" height="1" fill="#000"/><rect x="11" y="3" width="1" height="1" fill="#000"/><rect x="11" y="4" width="1" height="1" fill="#000"/></svg>
<div style="left:558px;top:153px;width:12px;height:1px;background:#666666;"></div>
<div style="left:558px;top:164px;width:12px;height:1px;background:#666666;"></div>
<div style="left:558px;top:153px;width:1px;height:12px;background:#666666;"></div>
<div style="left:569px;top:153px;width:1px;height:12px;background:#666666;"></div>
<svg style="position:absolute;left:575px;top:152px" width="17" height="16" viewBox="0 0 17 16"><polygon points="0.5,5.5 8.5,0.5 15.5,7.5 7.5,11.5" fill="#008b8b" stroke="#000" stroke-width="1"/><polygon points="0.5,5.5 7.5,11.5 7.5,14.5 0.5,9.5" fill="#007070" stroke="#000" stroke-width="1"/><polygon points="7.5,11.5 15.5,7.5 15.5,10.5 7.5,14.5" fill="#fff" stroke="#000" stroke-width="1"/><line x1="1.5" y1="5.5" x2="7.5" y2="10.5" stroke="#fff" stroke-width="1"/></svg>
<svg style="position:absolute;left:538px;top:175px" width="12" height="8" viewBox="0 0 12 8" shape-rendering="crispEdges"><rect x="1" y="1" width="1" height="1" fill="#a8a8dc"/><rect x="2" y="1" width="1" height="1" fill="#a8a8dc"/><rect x="3" y="1" width="1" height="1" fill="#a8a8dc"/><rect x="4" y="1" width="1" height="1" fill="#a8a8dc"/><rect x="5" y="1" width="1" height="1" fill="#a8a8dc"/><rect x="6" y="1" width="1" height="1" fill="#a8a8dc"/><rect x="1" y="2" width="1" height="1" fill="#a8a8dc"/><rect x="2" y="2" width="1" height="1" fill="#a8a8dc"/><rect x="3" y="2" width="1" height="1" fill="#a8a8dc"/><rect x="4" y="2" width="1" height="1" fill="#a8a8dc"/><rect x="5" y="2" width="1" height="1" fill="#a8a8dc"/><rect x="6" y="2" width="1" height="1" fill="#a8a8dc"/><rect x="1" y="3" width="1" height="1" fill="#a8a8dc"/><rect x="2" y="3" width="1" height="1" fill="#a8a8dc"/><rect x="3" y="3" width="1" height="1" fill="#a8a8dc"/><rect x="4" y="3" width="1" height="1" fill="#a8a8dc"/><rect x="5" y="3" width="1" height="1" fill="#a8a8dc"/><rect x="6" y="3" width="1" height="1" fill="#a8a8dc"/><rect x="1" y="4" width="1" height="1" fill="#a8a8dc"/><rect x="2" y="4" width="1" height="1" fill="#a8a8dc"/><rect x="3" y="4" width="1" height="1" fill="#a8a8dc"/><rect x="4" y="4" width="1" height="1" fill="#a8a8dc"/><rect x="5" y="4" width="1" height="1" fill="#a8a8dc"/><rect x="6" y="4" width="1" height="1" fill="#a8a8dc"/><rect x="1" y="5" width="1" height="1" fill="#a8a8dc"/><rect x="2" y="5" width="1" height="1" fill="#a8a8dc"/><rect x="3" y="5" width="1" height="1" fill="#a8a8dc"/><rect x="4" y="5" width="1" height="1" fill="#a8a8dc"/><rect x="5" y="5" width="1" height="1" fill="#a8a8dc"/><rect x="6" y="5" width="1" height="1" fill="#a8a8dc"/><rect x="1" y="6" width="1" height="1" fill="#a8a8dc"/><rect x="2" y="6" width="1" height="1" fill="#a8a8dc"/><rect x="3" y="6" width="1" height="1" fill="#a8a8dc"/><rect x="4" y="6" width="1" height="1" fill="#a8a8dc"/><rect x="5" y="6" width="1" height="1" fill="#a8a8dc"/><rect x="6" y="6" width="1" height="1" fill="#a8a8dc"/><rect x="2" y="2" width="1" height="1" fill="#d4d4f8"/><rect x="3" y="2" width="1" height="1" fill="#d4d4f8"/><rect x="4" y="2" width="1" height="1" fill="#d4d4f8"/><rect x="5" y="2" width="1" height="1" fill="#d4d4f8"/><rect x="2" y="3" width="1" height="1" fill="#d4d4f8"/><rect x="2" y="4" width="1" height="1" fill="#d4d4f8"/><rect x="2" y="5" width="1" height="1" fill="#d4d4f8"/><rect x="5" y="3" width="1" height="1" fill="#d4d4f8"/><rect x="5" y="4" width="1" height="1" fill="#d4d4f8"/><rect x="5" y="5" width="1" height="1" fill="#d4d4f8"/><rect x="3" y="5" width="1" height="1" fill="#d4d4f8"/><rect x="4" y="5" width="1" height="1" fill="#d4d4f8"/><rect x="4" y="5" width="1" height="1" fill="#f0f0ff"/><rect x="5" y="4" width="1" height="1" fill="#f0f0ff"/><rect x="5" y="5" width="1" height="1" fill="#f0f0ff"/><rect x="3" y="3" width="1" height="1" fill="#000"/><rect x="4" y="3" width="1" height="1" fill="#000"/><rect x="3" y="4" width="1" height="1" fill="#000"/><rect x="4" y="4" width="1" height="1" fill="#000"/><rect x="2" y="0" width="1" height="1" fill="#000"/><rect x="3" y="0" width="1" height="1" fill="#000"/><rect x="4" y="0" width="1" height="1" fill="#000"/><rect x="5" y="0" width="1" height="1" fill="#000"/><rect x="1" y="1" width="1" height="1" fill="#000"/><rect x="6" y="1" width="1" height="1" fill="#000"/><rect x="0" y="2" width="1" height="1" fill="#000"/><rect x="7" y="2" width="1" height="1" fill="#000"/><rect x="0" y="3" width="1" height="1" fill="#000"/><rect x="7" y="3" width="1" height="1" fill="#000"/><rect x="0" y="4" width="1" height="1" fill="#000"/><rect x="7" y="4" width="1" height="1" fill="#000"/><rect x="0" y="5" width="1" height="1" fill="#000"/><rect x="7" y="5" width="1" height="1" fill="#000"/><rect x="1" y="6" width="1" height="1" fill="#000"/><rect x="6" y="6" width="1" height="1" fill="#000"/><rect x="2" y="7" width="1" height="1" fill="#000"/><rect x="3" y="7" width="1" height="1" fill="#000"/><rect x="4" y="7" width="1" height="1" fill="#000"/><rect x="5" y="7" width="1" height="1" fill="#000"/><rect x="8" y="3" width="1" height="1" fill="#000"/><rect x="8" y="4" width="1" height="1" fill="#000"/><rect x="9" y="3" width="1" height="1" fill="#000"/><rect x="9" y="4" width="1" height="1" fill="#000"/><rect x="10" y="3" width="1" height="1" fill="#000"/><rect x="10" y="4" width="1" height="1" fill="#000"/><rect x="11" y="3" width="1" height="1" fill="#000"/><rect x="11" y="4" width="1" height="1" fill="#000"/></svg>
<div style="left:558px;top:174px;width:12px;height:1px;background:#666666;"></div>
<div style="left:558px;top:185px;width:12px;height:1px;background:#666666;"></div>
<div style="left:558px;top:174px;width:1px;height:12px;background:#666666;"></div>
<div style="left:569px;top:174px;width:1px;height:12px;background:#666666;"></div>
<svg style="position:absolute;left:575px;top:173px" width="17" height="16" viewBox="0 0 17 16"><polygon points="0.5,5.5 8.5,0.5 15.5,7.5 7.5,11.5" fill="#008b8b" stroke="#000" stroke-width="1"/><polygon points="0.5,5.5 7.5,11.5 7.5,14.5 0.5,9.5" fill="#007070" stroke="#000" stroke-width="1"/><polygon points="7.5,11.5 15.5,7.5 15.5,10.5 7.5,14.5" fill="#fff" stroke="#000" stroke-width="1"/><line x1="1.5" y1="5.5" x2="7.5" y2="10.5" stroke="#fff" stroke-width="1"/></svg>
<svg style="position:absolute;left:538px;top:196px" width="12" height="8" viewBox="0 0 12 8" shape-rendering="crispEdges"><rect x="1" y="1" width="1" height="1" fill="#a8a8dc"/><rect x="2" y="1" width="1" height="1" fill="#a8a8dc"/><rect x="3" y="1" width="1" height="1" fill="#a8a8dc"/><rect x="4" y="1" width="1" height="1" fill="#a8a8dc"/><rect x="5" y="1" width="1" height="1" fill="#a8a8dc"/><rect x="6" y="1" width="1" height="1" fill="#a8a8dc"/><rect x="1" y="2" width="1" height="1" fill="#a8a8dc"/><rect x="2" y="2" width="1" height="1" fill="#a8a8dc"/><rect x="3" y="2" width="1" height="1" fill="#a8a8dc"/><rect x="4" y="2" width="1" height="1" fill="#a8a8dc"/><rect x="5" y="2" width="1" height="1" fill="#a8a8dc"/><rect x="6" y="2" width="1" height="1" fill="#a8a8dc"/><rect x="1" y="3" width="1" height="1" fill="#a8a8dc"/><rect x="2" y="3" width="1" height="1" fill="#a8a8dc"/><rect x="3" y="3" width="1" height="1" fill="#a8a8dc"/><rect x="4" y="3" width="1" height="1" fill="#a8a8dc"/><rect x="5" y="3" width="1" height="1" fill="#a8a8dc"/><rect x="6" y="3" width="1" height="1" fill="#a8a8dc"/><rect x="1" y="4" width="1" height="1" fill="#a8a8dc"/><rect x="2" y="4" width="1" height="1" fill="#a8a8dc"/><rect x="3" y="4" width="1" height="1" fill="#a8a8dc"/><rect x="4" y="4" width="1" height="1" fill="#a8a8dc"/><rect x="5" y="4" width="1" height="1" fill="#a8a8dc"/><rect x="6" y="4" width="1" height="1" fill="#a8a8dc"/><rect x="1" y="5" width="1" height="1" fill="#a8a8dc"/><rect x="2" y="5" width="1" height="1" fill="#a8a8dc"/><rect x="3" y="5" width="1" height="1" fill="#a8a8dc"/><rect x="4" y="5" width="1" height="1" fill="#a8a8dc"/><rect x="5" y="5" width="1" height="1" fill="#a8a8dc"/><rect x="6" y="5" width="1" height="1" fill="#a8a8dc"/><rect x="1" y="6" width="1" height="1" fill="#a8a8dc"/><rect x="2" y="6" width="1" height="1" fill="#a8a8dc"/><rect x="3" y="6" width="1" height="1" fill="#a8a8dc"/><rect x="4" y="6" width="1" height="1" fill="#a8a8dc"/><rect x="5" y="6" width="1" height="1" fill="#a8a8dc"/><rect x="6" y="6" width="1" height="1" fill="#a8a8dc"/><rect x="2" y="2" width="1" height="1" fill="#d4d4f8"/><rect x="3" y="2" width="1" height="1" fill="#d4d4f8"/><rect x="4" y="2" width="1" height="1" fill="#d4d4f8"/><rect x="5" y="2" width="1" height="1" fill="#d4d4f8"/><rect x="2" y="3" width="1" height="1" fill="#d4d4f8"/><rect x="2" y="4" width="1" height="1" fill="#d4d4f8"/><rect x="2" y="5" width="1" height="1" fill="#d4d4f8"/><rect x="5" y="3" width="1" height="1" fill="#d4d4f8"/><rect x="5" y="4" width="1" height="1" fill="#d4d4f8"/><rect x="5" y="5" width="1" height="1" fill="#d4d4f8"/><rect x="3" y="5" width="1" height="1" fill="#d4d4f8"/><rect x="4" y="5" width="1" height="1" fill="#d4d4f8"/><rect x="4" y="5" width="1" height="1" fill="#f0f0ff"/><rect x="5" y="4" width="1" height="1" fill="#f0f0ff"/><rect x="5" y="5" width="1" height="1" fill="#f0f0ff"/><rect x="3" y="3" width="1" height="1" fill="#000"/><rect x="4" y="3" width="1" height="1" fill="#000"/><rect x="3" y="4" width="1" height="1" fill="#000"/><rect x="4" y="4" width="1" height="1" fill="#000"/><rect x="2" y="0" width="1" height="1" fill="#000"/><rect x="3" y="0" width="1" height="1" fill="#000"/><rect x="4" y="0" width="1" height="1" fill="#000"/><rect x="5" y="0" width="1" height="1" fill="#000"/><rect x="1" y="1" width="1" height="1" fill="#000"/><rect x="6" y="1" width="1" height="1" fill="#000"/><rect x="0" y="2" width="1" height="1" fill="#000"/><rect x="7" y="2" width="1" height="1" fill="#000"/><rect x="0" y="3" width="1" height="1" fill="#000"/><rect x="7" y="3" width="1" height="1" fill="#000"/><rect x="0" y="4" width="1" height="1" fill="#000"/><rect x="7" y="4" width="1" height="1" fill="#000"/><rect x="0" y="5" width="1" height="1" fill="#000"/><rect x="7" y="5" width="1" height="1" fill="#000"/><rect x="1" y="6" width="1" height="1" fill="#000"/><rect x="6" y="6" width="1" height="1" fill="#000"/><rect x="2" y="7" width="1" height="1" fill="#000"/><rect x="3" y="7" width="1" height="1" fill="#000"/><rect x="4" y="7" width="1" height="1" fill="#000"/><rect x="5" y="7" width="1" height="1" fill="#000"/><rect x="8" y="3" width="1" height="1" fill="#000"/><rect x="8" y="4" width="1" height="1" fill="#000"/><rect x="9" y="3" width="1" height="1" fill="#000"/><rect x="9" y="4" width="1" height="1" fill="#000"/><rect x="10" y="3" width="1" height="1" fill="#000"/><rect x="10" y="4" width="1" height="1" fill="#000"/><rect x="11" y="3" width="1" height="1" fill="#000"/><rect x="11" y="4" width="1" height="1" fill="#000"/></svg>
<div style="left:558px;top:195px;width:12px;height:1px;background:#666666;"></div>
<div style="left:558px;top:206px;width:12px;height:1px;background:#666666;"></div>
<div style="left:558px;top:195px;width:1px;height:12px;background:#666666;"></div>
<div style="left:569px;top:195px;width:1px;height:12px;background:#666666;"></div>
<svg style="position:absolute;left:575px;top:194px" width="17" height="16" viewBox="0 0 17 16"><polygon points="0.5,5.5 8.5,0.5 15.5,7.5 7.5,11.5" fill="#008b8b" stroke="#000" stroke-width="1"/><polygon points="0.5,5.5 7.5,11.5 7.5,14.5 0.5,9.5" fill="#007070" stroke="#000" stroke-width="1"/><polygon points="7.5,11.5 15.5,7.5 15.5,10.5 7.5,14.5" fill="#fff" stroke="#000" stroke-width="1"/><line x1="1.5" y1="5.5" x2="7.5" y2="10.5" stroke="#fff" stroke-width="1"/></svg>
<svg style="position:absolute;left:538px;top:217px" width="12" height="8" viewBox="0 0 12 8" shape-rendering="crispEdges"><rect x="1" y="1" width="1" height="1" fill="#a8a8dc"/><rect x="2" y="1" width="1" height="1" fill="#a8a8dc"/><rect x="3" y="1" width="1" height="1" fill="#a8a8dc"/><rect x="4" y="1" width="1" height="1" fill="#a8a8dc"/><rect x="5" y="1" width="1" height="1" fill="#a8a8dc"/><rect x="6" y="1" width="1" height="1" fill="#a8a8dc"/><rect x="1" y="2" width="1" height="1" fill="#a8a8dc"/><rect x="2" y="2" width="1" height="1" fill="#a8a8dc"/><rect x="3" y="2" width="1" height="1" fill="#a8a8dc"/><rect x="4" y="2" width="1" height="1" fill="#a8a8dc"/><rect x="5" y="2" width="1" height="1" fill="#a8a8dc"/><rect x="6" y="2" width="1" height="1" fill="#a8a8dc"/><rect x="1" y="3" width="1" height="1" fill="#a8a8dc"/><rect x="2" y="3" width="1" height="1" fill="#a8a8dc"/><rect x="3" y="3" width="1" height="1" fill="#a8a8dc"/><rect x="4" y="3" width="1" height="1" fill="#a8a8dc"/><rect x="5" y="3" width="1" height="1" fill="#a8a8dc"/><rect x="6" y="3" width="1" height="1" fill="#a8a8dc"/><rect x="1" y="4" width="1" height="1" fill="#a8a8dc"/><rect x="2" y="4" width="1" height="1" fill="#a8a8dc"/><rect x="3" y="4" width="1" height="1" fill="#a8a8dc"/><rect x="4" y="4" width="1" height="1" fill="#a8a8dc"/><rect x="5" y="4" width="1" height="1" fill="#a8a8dc"/><rect x="6" y="4" width="1" height="1" fill="#a8a8dc"/><rect x="1" y="5" width="1" height="1" fill="#a8a8dc"/><rect x="2" y="5" width="1" height="1" fill="#a8a8dc"/><rect x="3" y="5" width="1" height="1" fill="#a8a8dc"/><rect x="4" y="5" width="1" height="1" fill="#a8a8dc"/><rect x="5" y="5" width="1" height="1" fill="#a8a8dc"/><rect x="6" y="5" width="1" height="1" fill="#a8a8dc"/><rect x="1" y="6" width="1" height="1" fill="#a8a8dc"/><rect x="2" y="6" width="1" height="1" fill="#a8a8dc"/><rect x="3" y="6" width="1" height="1" fill="#a8a8dc"/><rect x="4" y="6" width="1" height="1" fill="#a8a8dc"/><rect x="5" y="6" width="1" height="1" fill="#a8a8dc"/><rect x="6" y="6" width="1" height="1" fill="#a8a8dc"/><rect x="2" y="2" width="1" height="1" fill="#d4d4f8"/><rect x="3" y="2" width="1" height="1" fill="#d4d4f8"/><rect x="4" y="2" width="1" height="1" fill="#d4d4f8"/><rect x="5" y="2" width="1" height="1" fill="#d4d4f8"/><rect x="2" y="3" width="1" height="1" fill="#d4d4f8"/><rect x="2" y="4" width="1" height="1" fill="#d4d4f8"/><rect x="2" y="5" width="1" height="1" fill="#d4d4f8"/><rect x="5" y="3" width="1" height="1" fill="#d4d4f8"/><rect x="5" y="4" width="1" height="1" fill="#d4d4f8"/><rect x="5" y="5" width="1" height="1" fill="#d4d4f8"/><rect x="3" y="5" width="1" height="1" fill="#d4d4f8"/><rect x="4" y="5" width="1" height="1" fill="#d4d4f8"/><rect x="4" y="5" width="1" height="1" fill="#f0f0ff"/><rect x="5" y="4" width="1" height="1" fill="#f0f0ff"/><rect x="5" y="5" width="1" height="1" fill="#f0f0ff"/><rect x="3" y="3" width="1" height="1" fill="#000"/><rect x="4" y="3" width="1" height="1" fill="#000"/><rect x="3" y="4" width="1" height="1" fill="#000"/><rect x="4" y="4" width="1" height="1" fill="#000"/><rect x="2" y="0" width="1" height="1" fill="#000"/><rect x="3" y="0" width="1" height="1" fill="#000"/><rect x="4" y="0" width="1" height="1" fill="#000"/><rect x="5" y="0" width="1" height="1" fill="#000"/><rect x="1" y="1" width="1" height="1" fill="#000"/><rect x="6" y="1" width="1" height="1" fill="#000"/><rect x="0" y="2" width="1" height="1" fill="#000"/><rect x="7" y="2" width="1" height="1" fill="#000"/><rect x="0" y="3" width="1" height="1" fill="#000"/><rect x="7" y="3" width="1" height="1" fill="#000"/><rect x="0" y="4" width="1" height="1" fill="#000"/><rect x="7" y="4" width="1" height="1" fill="#000"/><rect x="0" y="5" width="1" height="1" fill="#000"/><rect x="7" y="5" width="1" height="1" fill="#000"/><rect x="1" y="6" width="1" height="1" fill="#000"/><rect x="6" y="6" width="1" height="1" fill="#000"/><rect x="2" y="7" width="1" height="1" fill="#000"/><rect x="3" y="7" width="1" height="1" fill="#000"/><rect x="4" y="7" width="1" height="1" fill="#000"/><rect x="5" y="7" width="1" height="1" fill="#000"/><rect x="8" y="3" width="1" height="1" fill="#000"/><rect x="8" y="4" width="1" height="1" fill="#000"/><rect x="9" y="3" width="1" height="1" fill="#000"/><rect x="9" y="4" width="1" height="1" fill="#000"/><rect x="10" y="3" width="1" height="1" fill="#000"/><rect x="10" y="4" width="1" height="1" fill="#000"/><rect x="11" y="3" width="1" height="1" fill="#000"/><rect x="11" y="4" width="1" height="1" fill="#000"/></svg>
<div style="left:558px;top:216px;width:12px;height:1px;background:#666666;"></div>
<div style="left:558px;top:227px;width:12px;height:1px;background:#666666;"></div>
<div style="left:558px;top:216px;width:1px;height:12px;background:#666666;"></div>
<div style="left:569px;top:216px;width:1px;height:12px;background:#666666;"></div>
<svg style="position:absolute;left:575px;top:215px" width="17" height="16" viewBox="0 0 17 16"><polygon points="0.5,5.5 8.5,0.5 15.5,7.5 7.5,11.5" fill="#008b8b" stroke="#000" stroke-width="1"/><polygon points="0.5,5.5 7.5,11.5 7.5,14.5 0.5,9.5" fill="#007070" stroke="#000" stroke-width="1"/><polygon points="7.5,11.5 15.5,7.5 15.5,10.5 7.5,14.5" fill="#fff" stroke="#000" stroke-width="1"/><line x1="1.5" y1="5.5" x2="7.5" y2="10.5" stroke="#fff" stroke-width="1"/></svg>
<svg style="position:absolute;left:538px;top:238px" width="12" height="8" viewBox="0 0 12 8" shape-rendering="crispEdges"><rect x="1" y="1" width="1" height="1" fill="#a8a8dc"/><rect x="2" y="1" width="1" height="1" fill="#a8a8dc"/><rect x="3" y="1" width="1" height="1" fill="#a8a8dc"/><rect x="4" y="1" width="1" height="1" fill="#a8a8dc"/><rect x="5" y="1" width="1" height="1" fill="#a8a8dc"/><rect x="6" y="1" width="1" height="1" fill="#a8a8dc"/><rect x="1" y="2" width="1" height="1" fill="#a8a8dc"/><rect x="2" y="2" width="1" height="1" fill="#a8a8dc"/><rect x="3" y="2" width="1" height="1" fill="#a8a8dc"/><rect x="4" y="2" width="1" height="1" fill="#a8a8dc"/><rect x="5" y="2" width="1" height="1" fill="#a8a8dc"/><rect x="6" y="2" width="1" height="1" fill="#a8a8dc"/><rect x="1" y="3" width="1" height="1" fill="#a8a8dc"/><rect x="2" y="3" width="1" height="1" fill="#a8a8dc"/><rect x="3" y="3" width="1" height="1" fill="#a8a8dc"/><rect x="4" y="3" width="1" height="1" fill="#a8a8dc"/><rect x="5" y="3" width="1" height="1" fill="#a8a8dc"/><rect x="6" y="3" width="1" height="1" fill="#a8a8dc"/><rect x="1" y="4" width="1" height="1" fill="#a8a8dc"/><rect x="2" y="4" width="1" height="1" fill="#a8a8dc"/><rect x="3" y="4" width="1" height="1" fill="#a8a8dc"/><rect x="4" y="4" width="1" height="1" fill="#a8a8dc"/><rect x="5" y="4" width="1" height="1" fill="#a8a8dc"/><rect x="6" y="4" width="1" height="1" fill="#a8a8dc"/><rect x="1" y="5" width="1" height="1" fill="#a8a8dc"/><rect x="2" y="5" width="1" height="1" fill="#a8a8dc"/><rect x="3" y="5" width="1" height="1" fill="#a8a8dc"/><rect x="4" y="5" width="1" height="1" fill="#a8a8dc"/><rect x="5" y="5" width="1" height="1" fill="#a8a8dc"/><rect x="6" y="5" width="1" height="1" fill="#a8a8dc"/><rect x="1" y="6" width="1" height="1" fill="#a8a8dc"/><rect x="2" y="6" width="1" height="1" fill="#a8a8dc"/><rect x="3" y="6" width="1" height="1" fill="#a8a8dc"/><rect x="4" y="6" width="1" height="1" fill="#a8a8dc"/><rect x="5" y="6" width="1" height="1" fill="#a8a8dc"/><rect x="6" y="6" width="1" height="1" fill="#a8a8dc"/><rect x="2" y="2" width="1" height="1" fill="#d4d4f8"/><rect x="3" y="2" width="1" height="1" fill="#d4d4f8"/><rect x="4" y="2" width="1" height="1" fill="#d4d4f8"/><rect x="5" y="2" width="1" height="1" fill="#d4d4f8"/><rect x="2" y="3" width="1" height="1" fill="#d4d4f8"/><rect x="2" y="4" width="1" height="1" fill="#d4d4f8"/><rect x="2" y="5" width="1" height="1" fill="#d4d4f8"/><rect x="5" y="3" width="1" height="1" fill="#d4d4f8"/><rect x="5" y="4" width="1" height="1" fill="#d4d4f8"/><rect x="5" y="5" width="1" height="1" fill="#d4d4f8"/><rect x="3" y="5" width="1" height="1" fill="#d4d4f8"/><rect x="4" y="5" width="1" height="1" fill="#d4d4f8"/><rect x="4" y="5" width="1" height="1" fill="#f0f0ff"/><rect x="5" y="4" width="1" height="1" fill="#f0f0ff"/><rect x="5" y="5" width="1" height="1" fill="#f0f0ff"/><rect x="3" y="3" width="1" height="1" fill="#000"/><rect x="4" y="3" width="1" height="1" fill="#000"/><rect x="3" y="4" width="1" height="1" fill="#000"/><rect x="4" y="4" width="1" height="1" fill="#000"/><rect x="2" y="0" width="1" height="1" fill="#000"/><rect x="3" y="0" width="1" height="1" fill="#000"/><rect x="4" y="0" width="1" height="1" fill="#000"/><rect x="5" y="0" width="1" height="1" fill="#000"/><rect x="1" y="1" width="1" height="1" fill="#000"/><rect x="6" y="1" width="1" height="1" fill="#000"/><rect x="0" y="2" width="1" height="1" fill="#000"/><rect x="7" y="2" width="1" height="1" fill="#000"/><rect x="0" y="3" width="1" height="1" fill="#000"/><rect x="7" y="3" width="1" height="1" fill="#000"/><rect x="0" y="4" width="1" height="1" fill="#000"/><rect x="7" y="4" width="1" height="1" fill="#000"/><rect x="0" y="5" width="1" height="1" fill="#000"/><rect x="7" y="5" width="1" height="1" fill="#000"/><rect x="1" y="6" width="1" height="1" fill="#000"/><rect x="6" y="6" width="1" height="1" fill="#000"/><rect x="2" y="7" width="1" height="1" fill="#000"/><rect x="3" y="7" width="1" height="1" fill="#000"/><rect x="4" y="7" width="1" height="1" fill="#000"/><rect x="5" y="7" width="1" height="1" fill="#000"/><rect x="8" y="3" width="1" height="1" fill="#000"/><rect x="8" y="4" width="1" height="1" fill="#000"/><rect x="9" y="3" width="1" height="1" fill="#000"/><rect x="9" y="4" width="1" height="1" fill="#000"/><rect x="10" y="3" width="1" height="1" fill="#000"/><rect x="10" y="4" width="1" height="1" fill="#000"/><rect x="11" y="3" width="1" height="1" fill="#000"/><rect x="11" y="4" width="1" height="1" fill="#000"/></svg>
<div style="left:558px;top:237px;width:12px;height:1px;background:#666666;"></div>
<div style="left:558px;top:248px;width:12px;height:1px;background:#666666;"></div>
<div style="left:558px;top:237px;width:1px;height:12px;background:#666666;"></div>
<div style="left:569px;top:237px;width:1px;height:12px;background:#666666;"></div>
<svg style="position:absolute;left:575px;top:236px" width="17" height="16" viewBox="0 0 17 16"><polygon points="0.5,5.5 8.5,0.5 15.5,7.5 7.5,11.5" fill="#008b8b" stroke="#000" stroke-width="1"/><polygon points="0.5,5.5 7.5,11.5 7.5,14.5 0.5,9.5" fill="#007070" stroke="#000" stroke-width="1"/><polygon points="7.5,11.5 15.5,7.5 15.5,10.5 7.5,14.5" fill="#fff" stroke="#000" stroke-width="1"/><line x1="1.5" y1="5.5" x2="7.5" y2="10.5" stroke="#fff" stroke-width="1"/></svg>
<svg style="position:absolute;left:538px;top:259px" width="12" height="8" viewBox="0 0 12 8" shape-rendering="crispEdges"><rect x="1" y="1" width="1" height="1" fill="#a8a8dc"/><rect x="2" y="1" width="1" height="1" fill="#a8a8dc"/><rect x="3" y="1" width="1" height="1" fill="#a8a8dc"/><rect x="4" y="1" width="1" height="1" fill="#a8a8dc"/><rect x="5" y="1" width="1" height="1" fill="#a8a8dc"/><rect x="6" y="1" width="1" height="1" fill="#a8a8dc"/><rect x="1" y="2" width="1" height="1" fill="#a8a8dc"/><rect x="2" y="2" width="1" height="1" fill="#a8a8dc"/><rect x="3" y="2" width="1" height="1" fill="#a8a8dc"/><rect x="4" y="2" width="1" height="1" fill="#a8a8dc"/><rect x="5" y="2" width="1" height="1" fill="#a8a8dc"/><rect x="6" y="2" width="1" height="1" fill="#a8a8dc"/><rect x="1" y="3" width="1" height="1" fill="#a8a8dc"/><rect x="2" y="3" width="1" height="1" fill="#a8a8dc"/><rect x="3" y="3" width="1" height="1" fill="#a8a8dc"/><rect x="4" y="3" width="1" height="1" fill="#a8a8dc"/><rect x="5" y="3" width="1" height="1" fill="#a8a8dc"/><rect x="6" y="3" width="1" height="1" fill="#a8a8dc"/><rect x="1" y="4" width="1" height="1" fill="#a8a8dc"/><rect x="2" y="4" width="1" height="1" fill="#a8a8dc"/><rect x="3" y="4" width="1" height="1" fill="#a8a8dc"/><rect x="4" y="4" width="1" height="1" fill="#a8a8dc"/><rect x="5" y="4" width="1" height="1" fill="#a8a8dc"/><rect x="6" y="4" width="1" height="1" fill="#a8a8dc"/><rect x="1" y="5" width="1" height="1" fill="#a8a8dc"/><rect x="2" y="5" width="1" height="1" fill="#a8a8dc"/><rect x="3" y="5" width="1" height="1" fill="#a8a8dc"/><rect x="4" y="5" width="1" height="1" fill="#a8a8dc"/><rect x="5" y="5" width="1" height="1" fill="#a8a8dc"/><rect x="6" y="5" width="1" height="1" fill="#a8a8dc"/><rect x="1" y="6" width="1" height="1" fill="#a8a8dc"/><rect x="2" y="6" width="1" height="1" fill="#a8a8dc"/><rect x="3" y="6" width="1" height="1" fill="#a8a8dc"/><rect x="4" y="6" width="1" height="1" fill="#a8a8dc"/><rect x="5" y="6" width="1" height="1" fill="#a8a8dc"/><rect x="6" y="6" width="1" height="1" fill="#a8a8dc"/><rect x="2" y="2" width="1" height="1" fill="#d4d4f8"/><rect x="3" y="2" width="1" height="1" fill="#d4d4f8"/><rect x="4" y="2" width="1" height="1" fill="#d4d4f8"/><rect x="5" y="2" width="1" height="1" fill="#d4d4f8"/><rect x="2" y="3" width="1" height="1" fill="#d4d4f8"/><rect x="2" y="4" width="1" height="1" fill="#d4d4f8"/><rect x="2" y="5" width="1" height="1" fill="#d4d4f8"/><rect x="5" y="3" width="1" height="1" fill="#d4d4f8"/><rect x="5" y="4" width="1" height="1" fill="#d4d4f8"/><rect x="5" y="5" width="1" height="1" fill="#d4d4f8"/><rect x="3" y="5" width="1" height="1" fill="#d4d4f8"/><rect x="4" y="5" width="1" height="1" fill="#d4d4f8"/><rect x="4" y="5" width="1" height="1" fill="#f0f0ff"/><rect x="5" y="4" width="1" height="1" fill="#f0f0ff"/><rect x="5" y="5" width="1" height="1" fill="#f0f0ff"/><rect x="3" y="3" width="1" height="1" fill="#000"/><rect x="4" y="3" width="1" height="1" fill="#000"/><rect x="3" y="4" width="1" height="1" fill="#000"/><rect x="4" y="4" width="1" height="1" fill="#000"/><rect x="2" y="0" width="1" height="1" fill="#000"/><rect x="3" y="0" width="1" height="1" fill="#000"/><rect x="4" y="0" width="1" height="1" fill="#000"/><rect x="5" y="0" width="1" height="1" fill="#000"/><rect x="1" y="1" width="1" height="1" fill="#000"/><rect x="6" y="1" width="1" height="1" fill="#000"/><rect x="0" y="2" width="1" height="1" fill="#000"/><rect x="7" y="2" width="1" height="1" fill="#000"/><rect x="0" y="3" width="1" height="1" fill="#000"/><rect x="7" y="3" width="1" height="1" fill="#000"/><rect x="0" y="4" width="1" height="1" fill="#000"/><rect x="7" y="4" width="1" height="1" fill="#000"/><rect x="0" y="5" width="1" height="1" fill="#000"/><rect x="7" y="5" width="1" height="1" fill="#000"/><rect x="1" y="6" width="1" height="1" fill="#000"/><rect x="6" y="6" width="1" height="1" fill="#000"/><rect x="2" y="7" width="1" height="1" fill="#000"/><rect x="3" y="7" width="1" height="1" fill="#000"/><rect x="4" y="7" width="1" height="1" fill="#000"/><rect x="5" y="7" width="1" height="1" fill="#000"/><rect x="8" y="3" width="1" height="1" fill="#000"/><rect x="8" y="4" width="1" height="1" fill="#000"/><rect x="9" y="3" width="1" height="1" fill="#000"/><rect x="9" y="4" width="1" height="1" fill="#000"/><rect x="10" y="3" width="1" height="1" fill="#000"/><rect x="10" y="4" width="1" height="1" fill="#000"/><rect x="11" y="3" width="1" height="1" fill="#000"/><rect x="11" y="4" width="1" height="1" fill="#000"/></svg>
<div style="left:558px;top:258px;width:12px;height:1px;background:#666666;"></div>
<div style="left:558px;top:269px;width:12px;height:1px;background:#666666;"></div>
<div style="left:558px;top:258px;width:1px;height:12px;background:#666666;"></div>
<div style="left:569px;top:258px;width:1px;height:12px;background:#666666;"></div>
<svg style="position:absolute;left:575px;top:257px" width="17" height="16" viewBox="0 0 17 16"><polygon points="0.5,5.5 8.5,0.5 15.5,7.5 7.5,11.5" fill="#008b8b" stroke="#000" stroke-width="1"/><polygon points="0.5,5.5 7.5,11.5 7.5,14.5 0.5,9.5" fill="#007070" stroke="#000" stroke-width="1"/><polygon points="7.5,11.5 15.5,7.5 15.5,10.5 7.5,14.5" fill="#fff" stroke="#000" stroke-width="1"/><line x1="1.5" y1="5.5" x2="7.5" y2="10.5" stroke="#fff" stroke-width="1"/></svg>
<svg style="position:absolute;left:538px;top:280px" width="12" height="8" viewBox="0 0 12 8" shape-rendering="crispEdges"><rect x="1" y="1" width="1" height="1" fill="#a8a8dc"/><rect x="2" y="1" width="1" height="1" fill="#a8a8dc"/><rect x="3" y="1" width="1" height="1" fill="#a8a8dc"/><rect x="4" y="1" width="1" height="1" fill="#a8a8dc"/><rect x="5" y="1" width="1" height="1" fill="#a8a8dc"/><rect x="6" y="1" width="1" height="1" fill="#a8a8dc"/><rect x="1" y="2" width="1" height="1" fill="#a8a8dc"/><rect x="2" y="2" width="1" height="1" fill="#a8a8dc"/><rect x="3" y="2" width="1" height="1" fill="#a8a8dc"/><rect x="4" y="2" width="1" height="1" fill="#a8a8dc"/><rect x="5" y="2" width="1" height="1" fill="#a8a8dc"/><rect x="6" y="2" width="1" height="1" fill="#a8a8dc"/><rect x="1" y="3" width="1" height="1" fill="#a8a8dc"/><rect x="2" y="3" width="1" height="1" fill="#a8a8dc"/><rect x="3" y="3" width="1" height="1" fill="#a8a8dc"/><rect x="4" y="3" width="1" height="1" fill="#a8a8dc"/><rect x="5" y="3" width="1" height="1" fill="#a8a8dc"/><rect x="6" y="3" width="1" height="1" fill="#a8a8dc"/><rect x="1" y="4" width="1" height="1" fill="#a8a8dc"/><rect x="2" y="4" width="1" height="1" fill="#a8a8dc"/><rect x="3" y="4" width="1" height="1" fill="#a8a8dc"/><rect x="4" y="4" width="1" height="1" fill="#a8a8dc"/><rect x="5" y="4" width="1" height="1" fill="#a8a8dc"/><rect x="6" y="4" width="1" height="1" fill="#a8a8dc"/><rect x="1" y="5" width="1" height="1" fill="#a8a8dc"/><rect x="2" y="5" width="1" height="1" fill="#a8a8dc"/><rect x="3" y="5" width="1" height="1" fill="#a8a8dc"/><rect x="4" y="5" width="1" height="1" fill="#a8a8dc"/><rect x="5" y="5" width="1" height="1" fill="#a8a8dc"/><rect x="6" y="5" width="1" height="1" fill="#a8a8dc"/><rect x="1" y="6" width="1" height="1" fill="#a8a8dc"/><rect x="2" y="6" width="1" height="1" fill="#a8a8dc"/><rect x="3" y="6" width="1" height="1" fill="#a8a8dc"/><rect x="4" y="6" width="1" height="1" fill="#a8a8dc"/><rect x="5" y="6" width="1" height="1" fill="#a8a8dc"/><rect x="6" y="6" width="1" height="1" fill="#a8a8dc"/><rect x="2" y="2" width="1" height="1" fill="#d4d4f8"/><rect x="3" y="2" width="1" height="1" fill="#d4d4f8"/><rect x="4" y="2" width="1" height="1" fill="#d4d4f8"/><rect x="5" y="2" width="1" height="1" fill="#d4d4f8"/><rect x="2" y="3" width="1" height="1" fill="#d4d4f8"/><rect x="2" y="4" width="1" height="1" fill="#d4d4f8"/><rect x="2" y="5" width="1" height="1" fill="#d4d4f8"/><rect x="5" y="3" width="1" height="1" fill="#d4d4f8"/><rect x="5" y="4" width="1" height="1" fill="#d4d4f8"/><rect x="5" y="5" width="1" height="1" fill="#d4d4f8"/><rect x="3" y="5" width="1" height="1" fill="#d4d4f8"/><rect x="4" y="5" width="1" height="1" fill="#d4d4f8"/><rect x="4" y="5" width="1" height="1" fill="#f0f0ff"/><rect x="5" y="4" width="1" height="1" fill="#f0f0ff"/><rect x="5" y="5" width="1" height="1" fill="#f0f0ff"/><rect x="3" y="3" width="1" height="1" fill="#000"/><rect x="4" y="3" width="1" height="1" fill="#000"/><rect x="3" y="4" width="1" height="1" fill="#000"/><rect x="4" y="4" width="1" height="1" fill="#000"/><rect x="2" y="0" width="1" height="1" fill="#000"/><rect x="3" y="0" width="1" height="1" fill="#000"/><rect x="4" y="0" width="1" height="1" fill="#000"/><rect x="5" y="0" width="1" height="1" fill="#000"/><rect x="1" y="1" width="1" height="1" fill="#000"/><rect x="6" y="1" width="1" height="1" fill="#000"/><rect x="0" y="2" width="1" height="1" fill="#000"/><rect x="7" y="2" width="1" height="1" fill="#000"/><rect x="0" y="3" width="1" height="1" fill="#000"/><rect x="7" y="3" width="1" height="1" fill="#000"/><rect x="0" y="4" width="1" height="1" fill="#000"/><rect x="7" y="4" width="1" height="1" fill="#000"/><rect x="0" y="5" width="1" height="1" fill="#000"/><rect x="7" y="5" width="1" height="1" fill="#000"/><rect x="1" y="6" width="1" height="1" fill="#000"/><rect x="6" y="6" width="1" height="1" fill="#000"/><rect x="2" y="7" width="1" height="1" fill="#000"/><rect x="3" y="7" width="1" height="1" fill="#000"/><rect x="4" y="7" width="1" height="1" fill="#000"/><rect x="5" y="7" width="1" height="1" fill="#000"/><rect x="8" y="3" width="1" height="1" fill="#000"/><rect x="8" y="4" width="1" height="1" fill="#000"/><rect x="9" y="3" width="1" height="1" fill="#000"/><rect x="9" y="4" width="1" height="1" fill="#000"/><rect x="10" y="3" width="1" height="1" fill="#000"/><rect x="10" y="4" width="1" height="1" fill="#000"/><rect x="11" y="3" width="1" height="1" fill="#000"/><rect x="11" y="4" width="1" height="1" fill="#000"/></svg>
<div style="left:558px;top:279px;width:12px;height:1px;background:#666666;"></div>
<div style="left:558px;top:290px;width:12px;height:1px;background:#666666;"></div>
<div style="left:558px;top:279px;width:1px;height:12px;background:#666666;"></div>
<div style="left:569px;top:279px;width:1px;height:12px;background:#666666;"></div>
<svg style="position:absolute;left:575px;top:278px" width="17" height="16" viewBox="0 0 17 16"><polygon points="0.5,5.5 8.5,0.5 15.5,7.5 7.5,11.5" fill="#008b8b" stroke="#000" stroke-width="1"/><polygon points="0.5,5.5 7.5,11.5 7.5,14.5 0.5,9.5" fill="#007070" stroke="#000" stroke-width="1"/><polygon points="7.5,11.5 15.5,7.5 15.5,10.5 7.5,14.5" fill="#fff" stroke="#000" stroke-width="1"/><line x1="1.5" y1="5.5" x2="7.5" y2="10.5" stroke="#fff" stroke-width="1"/></svg>
<svg style="position:absolute;left:538px;top:301px" width="12" height="8" viewBox="0 0 12 8" shape-rendering="crispEdges"><rect x="1" y="1" width="1" height="1" fill="#a8a8dc"/><rect x="2" y="1" width="1" height="1" fill="#a8a8dc"/><rect x="3" y="1" width="1" height="1" fill="#a8a8dc"/><rect x="4" y="1" width="1" height="1" fill="#a8a8dc"/><rect x="5" y="1" width="1" height="1" fill="#a8a8dc"/><rect x="6" y="1" width="1" height="1" fill="#a8a8dc"/><rect x="1" y="2" width="1" height="1" fill="#a8a8dc"/><rect x="2" y="2" width="1" height="1" fill="#a8a8dc"/><rect x="3" y="2" width="1" height="1" fill="#a8a8dc"/><rect x="4" y="2" width="1" height="1" fill="#a8a8dc"/><rect x="5" y="2" width="1" height="1" fill="#a8a8dc"/><rect x="6" y="2" width="1" height="1" fill="#a8a8dc"/><rect x="1" y="3" width="1" height="1" fill="#a8a8dc"/><rect x="2" y="3" width="1" height="1" fill="#a8a8dc"/><rect x="3" y="3" width="1" height="1" fill="#a8a8dc"/><rect x="4" y="3" width="1" height="1" fill="#a8a8dc"/><rect x="5" y="3" width="1" height="1" fill="#a8a8dc"/><rect x="6" y="3" width="1" height="1" fill="#a8a8dc"/><rect x="1" y="4" width="1" height="1" fill="#a8a8dc"/><rect x="2" y="4" width="1" height="1" fill="#a8a8dc"/><rect x="3" y="4" width="1" height="1" fill="#a8a8dc"/><rect x="4" y="4" width="1" height="1" fill="#a8a8dc"/><rect x="5" y="4" width="1" height="1" fill="#a8a8dc"/><rect x="6" y="4" width="1" height="1" fill="#a8a8dc"/><rect x="1" y="5" width="1" height="1" fill="#a8a8dc"/><rect x="2" y="5" width="1" height="1" fill="#a8a8dc"/><rect x="3" y="5" width="1" height="1" fill="#a8a8dc"/><rect x="4" y="5" width="1" height="1" fill="#a8a8dc"/><rect x="5" y="5" width="1" height="1" fill="#a8a8dc"/><rect x="6" y="5" width="1" height="1" fill="#a8a8dc"/><rect x="1" y="6" width="1" height="1" fill="#a8a8dc"/><rect x="2" y="6" width="1" height="1" fill="#a8a8dc"/><rect x="3" y="6" width="1" height="1" fill="#a8a8dc"/><rect x="4" y="6" width="1" height="1" fill="#a8a8dc"/><rect x="5" y="6" width="1" height="1" fill="#a8a8dc"/><rect x="6" y="6" width="1" height="1" fill="#a8a8dc"/><rect x="2" y="2" width="1" height="1" fill="#d4d4f8"/><rect x="3" y="2" width="1" height="1" fill="#d4d4f8"/><rect x="4" y="2" width="1" height="1" fill="#d4d4f8"/><rect x="5" y="2" width="1" height="1" fill="#d4d4f8"/><rect x="2" y="3" width="1" height="1" fill="#d4d4f8"/><rect x="2" y="4" width="1" height="1" fill="#d4d4f8"/><rect x="2" y="5" width="1" height="1" fill="#d4d4f8"/><rect x="5" y="3" width="1" height="1" fill="#d4d4f8"/><rect x="5" y="4" width="1" height="1" fill="#d4d4f8"/><rect x="5" y="5" width="1" height="1" fill="#d4d4f8"/><rect x="3" y="5" width="1" height="1" fill="#d4d4f8"/><rect x="4" y="5" width="1" height="1" fill="#d4d4f8"/><rect x="4" y="5" width="1" height="1" fill="#f0f0ff"/><rect x="5" y="4" width="1" height="1" fill="#f0f0ff"/><rect x="5" y="5" width="1" height="1" fill="#f0f0ff"/><rect x="3" y="3" width="1" height="1" fill="#000"/><rect x="4" y="3" width="1" height="1" fill="#000"/><rect x="3" y="4" width="1" height="1" fill="#000"/><rect x="4" y="4" width="1" height="1" fill="#000"/><rect x="2" y="0" width="1" height="1" fill="#000"/><rect x="3" y="0" width="1" height="1" fill="#000"/><rect x="4" y="0" width="1" height="1" fill="#000"/><rect x="5" y="0" width="1" height="1" fill="#000"/><rect x="1" y="1" width="1" height="1" fill="#000"/><rect x="6" y="1" width="1" height="1" fill="#000"/><rect x="0" y="2" width="1" height="1" fill="#000"/><rect x="7" y="2" width="1" height="1" fill="#000"/><rect x="0" y="3" width="1" height="1" fill="#000"/><rect x="7" y="3" width="1" height="1" fill="#000"/><rect x="0" y="4" width="1" height="1" fill="#000"/><rect x="7" y="4" width="1" height="1" fill="#000"/><rect x="0" y="5" width="1" height="1" fill="#000"/><rect x="7" y="5" width="1" height="1" fill="#000"/><rect x="1" y="6" width="1" height="1" fill="#000"/><rect x="6" y="6" width="1" height="1" fill="#000"/><rect x="2" y="7" width="1" height="1" fill="#000"/><rect x="3" y="7" width="1" height="1" fill="#000"/><rect x="4" y="7" width="1" height="1" fill="#000"/><rect x="5" y="7" width="1" height="1" fill="#000"/><rect x="8" y="3" width="1" height="1" fill="#000"/><rect x="8" y="4" width="1" height="1" fill="#000"/><rect x="9" y="3" width="1" height="1" fill="#000"/><rect x="9" y="4" width="1" height="1" fill="#000"/><rect x="10" y="3" width="1" height="1" fill="#000"/><rect x="10" y="4" width="1" height="1" fill="#000"/><rect x="11" y="3" width="1" height="1" fill="#000"/><rect x="11" y="4" width="1" height="1" fill="#000"/></svg>
<div style="left:558px;top:300px;width:12px;height:1px;background:#666666;"></div>
<div style="left:558px;top:311px;width:12px;height:1px;background:#666666;"></div>
<div style="left:558px;top:300px;width:1px;height:12px;background:#666666;"></div>
<div style="left:569px;top:300px;width:1px;height:12px;background:#666666;"></div>
<svg style="position:absolute;left:575px;top:299px" width="17" height="16" viewBox="0 0 17 16"><polygon points="0.5,5.5 8.5,0.5 15.5,7.5 7.5,11.5" fill="#008b8b" stroke="#000" stroke-width="1"/><polygon points="0.5,5.5 7.5,11.5 7.5,14.5 0.5,9.5" fill="#007070" stroke="#000" stroke-width="1"/><polygon points="7.5,11.5 15.5,7.5 15.5,10.5 7.5,14.5" fill="#fff" stroke="#000" stroke-width="1"/><line x1="1.5" y1="5.5" x2="7.5" y2="10.5" stroke="#fff" stroke-width="1"/></svg>
<div style="left:558px;top:321px;width:12px;height:1px;background:#666666;"></div>
<div style="left:558px;top:332px;width:12px;height:1px;background:#666666;"></div>
<div style="left:558px;top:321px;width:1px;height:12px;background:#666666;"></div>
<div style="left:569px;top:321px;width:1px;height:12px;background:#666666;"></div>
<svg style="position:absolute;left:575px;top:320px" width="17" height="16" viewBox="0 0 17 16"><polygon points="0.5,5.5 8.5,0.5 15.5,7.5 7.5,11.5" fill="#008b8b" stroke="#000" stroke-width="1"/><polygon points="0.5,5.5 7.5,11.5 7.5,14.5 0.5,9.5" fill="#007070" stroke="#000" stroke-width="1"/><polygon points="7.5,11.5 15.5,7.5 15.5,10.5 7.5,14.5" fill="#fff" stroke="#000" stroke-width="1"/><line x1="1.5" y1="5.5" x2="7.5" y2="10.5" stroke="#fff" stroke-width="1"/></svg>
<div style="left:247px;top:86px;width:1px;height:2px;background:#000;"></div>
<div style="left:246px;top:88px;width:1px;height:3px;background:#000;"></div>
<div style="left:245px;top:91px;width:1px;height:2px;background:#000;"></div>
<div style="left:244px;top:93px;width:1px;height:3px;background:#000;"></div>
<div style="left:493px;top:90px;width:2px;height:2px;background:#000;"></div>
<div style="left:496px;top:90px;width:2px;height:2px;background:#000;"></div>
<div style="left:499px;top:90px;width:2px;height:2px;background:#000;"></div>
<span class="b" style="left:0.00px;top:15px;font-weight:bold;font-size:10.8px;">мментариев</span>
<span class="b" style="left:87.00px;top:15px;font-weight:bold;font-size:10.8px;letter-spacing:0.250px;">Параметры</span>
<span class="b" style="left:171.00px;top:15px;font-weight:bold;font-size:10.8px;">Фирма</span>
<span class="b" style="left:229.00px;top:15px;font-weight:bold;font-size:10.8px;letter-spacing:0.318px;">Группы тарифов и тарифы</span>
<span class="b" style="left:405.00px;top:15px;font-weight:bold;font-size:10.8px;letter-spacing:0.467px;">Скрипт поведения</span>
<span class="b" style="left:533.00px;top:15px;font-weight:bold;font-size:10.8px;letter-spacing:0.333px;">Объекты</span>
<span class="b" style="left:56.00px;top:39px;font-weight:bold;font-size:10.8px;letter-spacing:-0.500px;">IPN</span>
<span class="b" style="left:95.00px;top:39px;font-weight:bold;font-size:10.8px;letter-spacing:0.294px;">Разрешенные услуги</span>
<span class="b" style="left:56.00px;top:57px;font-weight:bold;font-size:10.8px;letter-spacing:0.429px;">Диапазон</span>
<span class="b" style="left:70.00px;top:83px;font-weight:bold;font-size:10.8px;letter-spacing:0.360px;">Выделить диапазон с маской</span>
<span class="b" style="left:329.00px;top:57px;font-weight:bold;font-size:10.8px;letter-spacing:0.500px;">Порт(ы)</span>
<span class="b" style="left:331.00px;top:81px;font-weight:bold;font-size:10.8px;">с</span>
<span class="b" style="left:405.00px;top:81px;font-weight:bold;font-size:10.8px;">по</span>
<span class="b" style="left:536.00px;top:57px;font-weight:bold;font-size:10.8px;letter-spacing:0.421px;">Источники/интерфейсы</span>
<span class="b" style="left:534.00px;top:81px;font-weight:bold;font-size:10.8px;letter-spacing:0.389px;">Отобразить на дату:</span>
<span class="b" style="left:688.00px;top:81px;font-weight:bold;font-size:10.8px;letter-spacing:0.889px;">09.04.2010</span>
<span class="b" style="left:657.00px;top:565px;font-weight:bold;font-size:10.8px;letter-spacing:2.000px;">Ok</span>
<span class="b" style="left:715.00px;top:565px;font-weight:bold;font-size:10.8px;letter-spacing:-0.200px;">Отмена</span>
<span class="n" style="left:366.00px;top:81px;font-weight:normal;font-size:11px;">0</span>
<span class="n" style="left:437.00px;top:81px;font-weight:normal;font-size:11px;letter-spacing:1.250px;">65535</span>
<span class="n" style="left:254.00px;top:116px;font-weight:normal;font-size:11px;letter-spacing:0.750px;">Категория</span>
<span class="n" style="left:69.00px;top:132px;font-weight:normal;font-size:11px;letter-spacing:0.583px;">Все категории</span>
<span class="n" style="left:90.00px;top:150px;font-weight:normal;font-size:11px;letter-spacing:0.500px;">den</span>
<span class="n" style="left:90.00px;top:168px;font-weight:normal;font-size:11px;letter-spacing:0.667px;">den2</span>
<span class="n" style="left:90.00px;top:186px;font-weight:normal;font-size:11px;letter-spacing:0.333px;">test</span>
<span class="n" style="left:90.00px;top:204px;font-weight:normal;font-size:11px;letter-spacing:0.533px;">Сеть 10.65.141.0</span>
<span class="n" style="left:90.00px;top:222px;font-weight:normal;font-size:11px;letter-spacing:0.533px;">Сеть 10.65.144.0</span>
<span class="n" style="left:90.00px;top:240px;font-weight:normal;font-size:11px;letter-spacing:0.375px;">Служебные</span>
<span class="n" style="left:574.00px;top:110px;font-weight:normal;font-size:11px;letter-spacing:0.583px;">Все источники</span>
<span class="n" style="left:595.00px;top:131px;font-weight:normal;font-size:11px;">CISCO</span>
<span class="n" style="left:594.00px;top:152px;font-weight:normal;font-size:11px;letter-spacing:0.923px;">rmir.ufanet.ru</span>
<span class="n" style="left:595.00px;top:173px;font-weight:normal;font-size:11px;">GATE</span>
<span class="n" style="left:594.00px;top:194px;font-weight:normal;font-size:11px;letter-spacing:0.556px;">Den source</span>
<span class="n" style="left:596.00px;top:215px;font-weight:normal;font-size:11px;letter-spacing:0.857px;">xcvxcvxc</span>
<span class="n" style="left:594.00px;top:236px;font-weight:normal;font-size:11px;letter-spacing:0.875px;">localhost</span>
<span class="n" style="left:594.00px;top:257px;font-weight:normal;font-size:11px;letter-spacing:0.846px;">192.168.184.97</span>
<span class="n" style="left:595.00px;top:278px;font-weight:normal;font-size:11px;letter-spacing:0.625px;">ghjjjjjjj</span>
<span class="n" style="left:594.00px;top:299px;font-weight:normal;font-size:11px;letter-spacing:1.000px;">HP</span>
<span class="n" style="left:594.00px;top:320px;font-weight:normal;font-size:11px;letter-spacing:1.000px;">localK</span>
</body></html>
